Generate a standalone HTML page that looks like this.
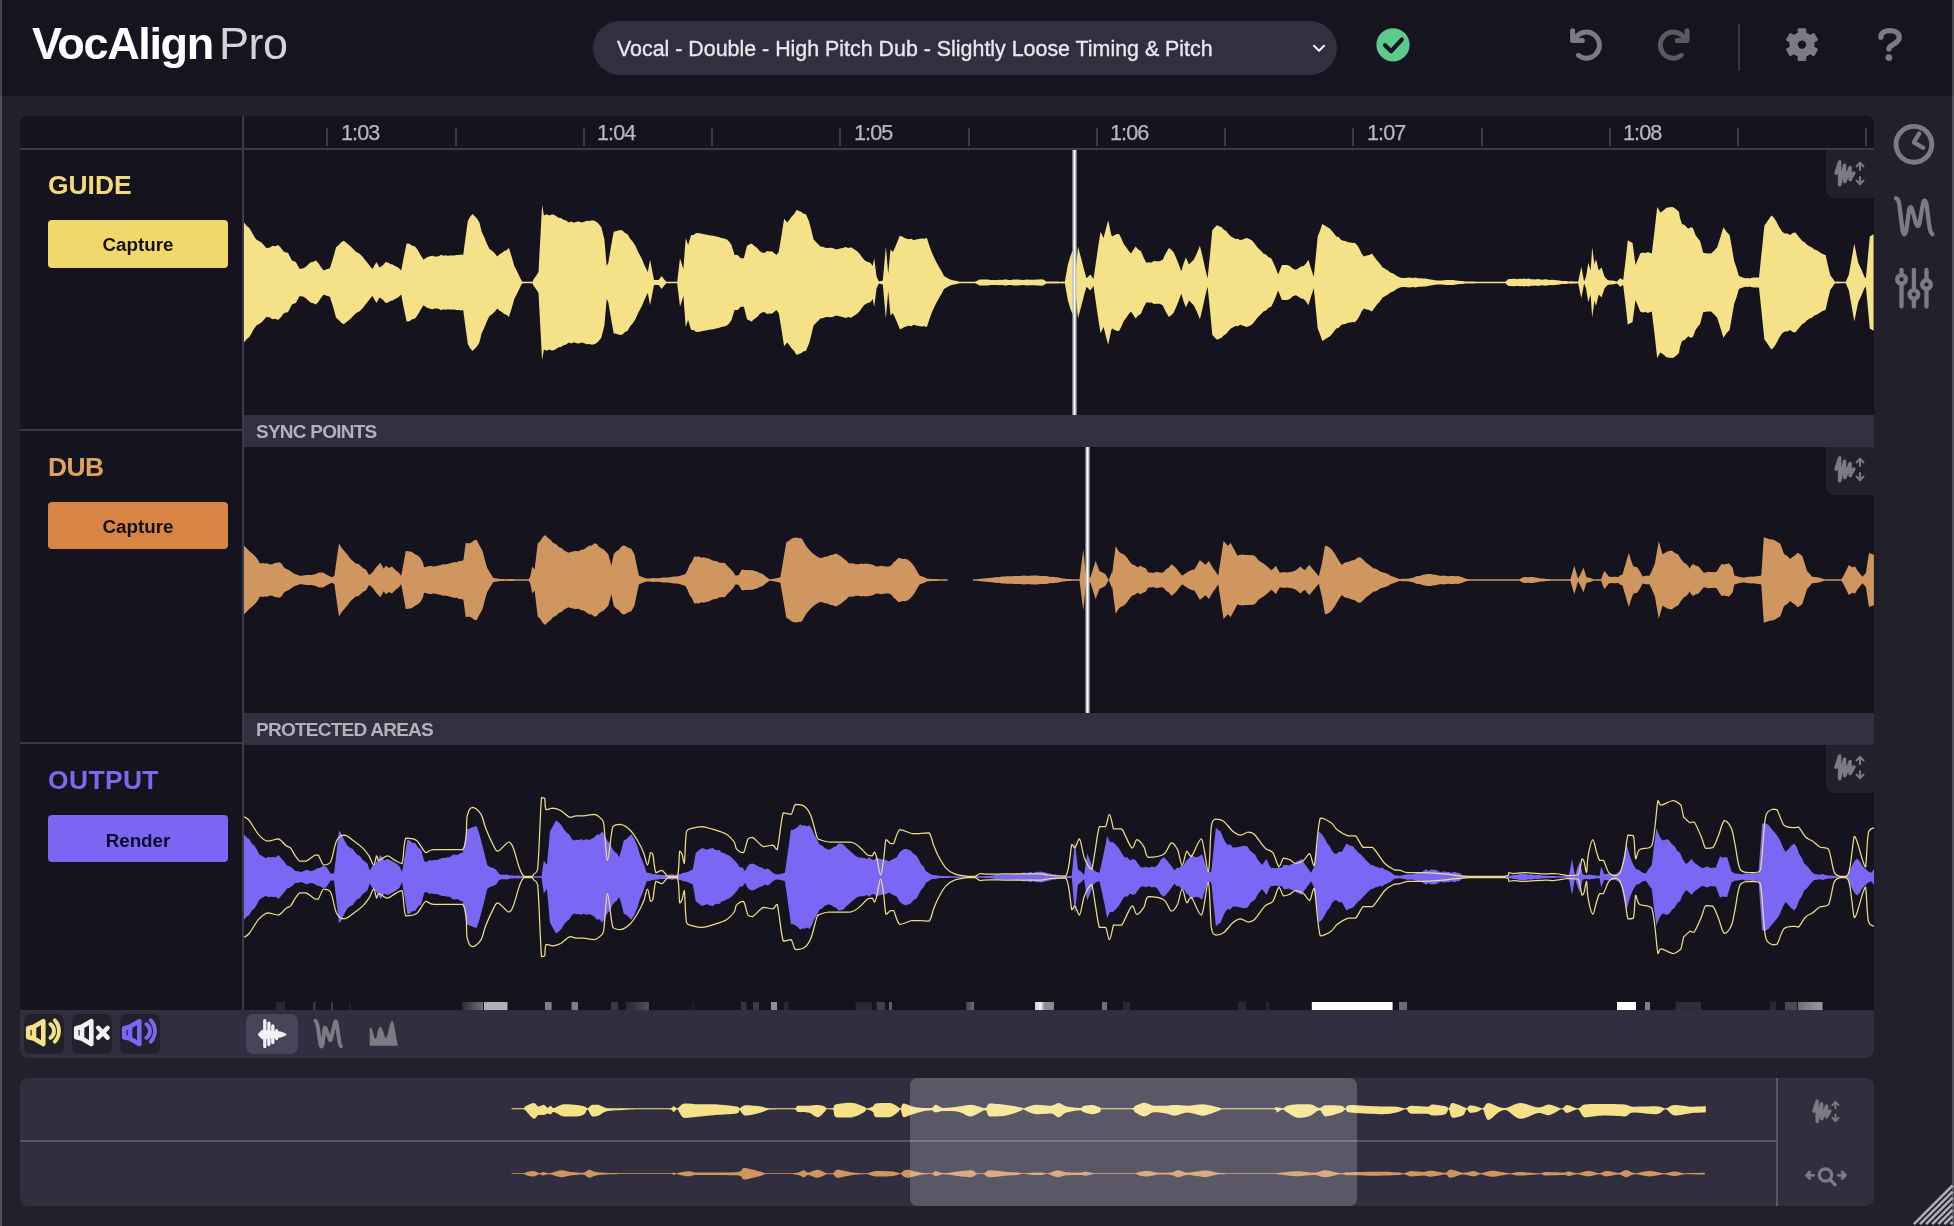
<!DOCTYPE html>
<html><head><meta charset="utf-8">
<style>
*{margin:0;padding:0;box-sizing:border-box}
html,body{width:1954px;height:1226px;overflow:hidden;background:#22212b;font-family:"Liberation Sans",sans-serif}
.abs{position:absolute}
#logo,#ddt,.lbl,.btn,.bar,.ruler{will-change:transform}
#hdr{left:0;top:0;width:1954px;height:96px;background:#16141e}
#lb{left:0;top:0;width:2px;height:1226px;background:linear-gradient(#48474d 0,#48474d 96px,#52515b 96px)}
#rb{left:1952px;top:0;width:2px;height:1226px;background:linear-gradient(#48474d 0,#48474d 96px,#52515b 96px)}
#logo{left:32px;top:18px;font-size:45px;color:#fff;font-weight:bold;white-space:nowrap;letter-spacing:-1.35px}
#logo span{font-weight:normal;color:#d4d4d8;margin-left:6px;letter-spacing:-0.4px}
#dd{left:593px;top:21px;width:744px;height:54px;border-radius:27px;background:#322f41}
#ddt{left:617px;top:37px;font-size:21.4px;color:#e8e8ec;white-space:nowrap;-webkit-text-stroke:0.35px #e8e8ec}
#panel{left:20px;top:116px;width:1854px;height:942px;border-radius:8px;background:#15131d;overflow:hidden}
.hl{background:#3a3849}
.lbl{font-weight:bold;font-size:26.4px}
.btn{width:180px;border-radius:4px;text-align:center;font-weight:bold;font-size:18.8px;color:#121019}
.bar{background:#322f41;color:#b3b1bb;font-weight:bold;font-size:19px;letter-spacing:-0.75px}
.ruler{color:#b8b7c0;font-size:21.6px;letter-spacing:-0.9px;-webkit-text-stroke:0.25px #b8b7c0}
.tick{width:2px;height:18px;background:#3d3b4c}
#tb{left:20px;top:1010px;width:1854px;height:48px;background:#312e40;border-radius:0 0 8px 8px}
.ib{width:40px;height:40px;border-radius:7px;background:#22212b}
#ov{left:20px;top:1078px;width:1854px;height:128px;border-radius:8px;background:#312e40;overflow:hidden}
</style></head><body>
<div id="hdr" class="abs"></div>
<div id="lb" class="abs"></div>
<div id="rb" class="abs"></div>
<div id="logo" class="abs">VocAlign<span>Pro</span></div>
<div id="dd" class="abs"></div>
<div id="ddt" class="abs">Vocal - Double - High Pitch Dub - Slightly Loose Timing &amp; Pitch</div>


<svg class="abs" style="left:0;top:0" width="1954" height="96" viewBox="0 0 1954 96">
<polyline points="1314,45.8 1319,50.8 1324,45.8" fill="none" stroke="#fff" stroke-width="2" stroke-linecap="round" stroke-linejoin="round"/>
<circle cx="1393" cy="44.8" r="16.6" fill="#5ec98c"/>
<polyline points="1385,45.2 1391.2,51.2 1401.8,39.6" fill="none" stroke="#15141e" stroke-width="4.2" stroke-linecap="round" stroke-linejoin="round"/>
<g fill="none" stroke="#7c7b84" stroke-width="5" stroke-linecap="round" stroke-linejoin="round">
<path d="M1575.1 38.7 A13 13 0 1 1 1578.4 55.4"/>
<polyline points="1572.6,30.8 1572.6,40.6 1582.4,40.6"/>
</g>
<g fill="none" stroke="#5a595f" stroke-width="5" stroke-linecap="round" stroke-linejoin="round">
<path d="M1684.6 38.7 A13 13 0 1 0 1681.3 55.4"/>
<polyline points="1687.1,30.8 1687.1,40.6 1677.3,40.6"/>
</g>
<rect x="1738" y="24" width="2" height="47" fill="#35334a"/>
<g fill="#7c7b84" transform="translate(1802 44.6)">
<circle r="12.6"/>
<rect x="-4.3" y="-16.4" width="8.6" height="8" rx="1.2"/>
<rect x="-4.3" y="-16.4" width="8.6" height="8" rx="1.2" transform="rotate(60)"/>
<rect x="-4.3" y="-16.4" width="8.6" height="8" rx="1.2" transform="rotate(120)"/>
<rect x="-4.3" y="-16.4" width="8.6" height="8" rx="1.2" transform="rotate(180)"/>
<rect x="-4.3" y="-16.4" width="8.6" height="8" rx="1.2" transform="rotate(240)"/>
<rect x="-4.3" y="-16.4" width="8.6" height="8" rx="1.2" transform="rotate(300)"/>
<circle r="4.2" fill="#16141e"/>
</g>
<path d="M1880.9 37.2 C1880.9 32.9 1885 30.6 1890 30.6 C1895.2 30.6 1899.3 33.3 1899.3 37.3 C1899.3 41.1 1896 42.9 1893 44.6 C1890.5 46 1888.9 47 1888.9 49.1" fill="none" stroke="#7c7b84" stroke-width="5.3" stroke-linecap="round" stroke-linejoin="round"/>
<circle cx="1888.9" cy="57.6" r="3.4" fill="#7c7b84"/>
</svg>

<div id="panel" class="abs"></div>
<!-- ruler line -->
<div class="abs hl" style="left:20px;top:148px;width:1854px;height:2px"></div>
<!-- vertical divider -->
<div class="abs hl" style="left:242px;top:116px;width:2px;height:894px"></div>
<!-- left col dividers -->
<div class="abs hl" style="left:20px;top:429px;width:222px;height:2px"></div>
<div class="abs hl" style="left:20px;top:742px;width:222px;height:2px"></div>

<div class="abs lbl" style="left:48px;top:170px;color:#f2da7a">GUIDE</div>
<div class="abs btn" style="left:48px;top:220px;height:48px;line-height:49px;background:#f2d76b">Capture</div>
<div class="abs lbl" style="left:48px;top:452px;color:#e0a35e;letter-spacing:-0.6px">DUB</div>
<div class="abs btn" style="left:48px;top:502px;height:47px;line-height:50px;background:#d88444">Capture</div>
<div class="abs lbl" style="left:48px;top:765px;color:#7b6af0;letter-spacing:0.4px">OUTPUT</div>
<div class="abs btn" style="left:48px;top:815px;height:47px;line-height:51px;background:#7a66f2;color:#0c0a2a">Render</div>

<div class="abs bar" style="left:244px;top:415px;width:1630px;height:32px;line-height:34px;padding-left:12px">SYNC POINTS</div>
<div class="abs bar" style="left:244px;top:713px;width:1630px;height:32px;line-height:34px;padding-left:12px">PROTECTED AREAS</div>

<svg class="abs" style="left:0;top:0" width="1954" height="1226" viewBox="0 0 1954 1226">
<defs><clipPath id="cg"><rect x="244" y="150" width="1630" height="265"/></clipPath><clipPath id="cd"><rect x="244" y="447" width="1630" height="266"/></clipPath><clipPath id="co"><rect x="244" y="745" width="1630" height="265"/></clipPath></defs>
<path clip-path="url(#cg)" fill="#f5e187" d="M244.0 222.5 L246.6 225.7 L249.3 228.0 L251.6 231.7 L253.9 235.9 L256.3 239.6 L259.0 240.9 L261.7 242.7 L264.0 245.2 L266.3 248.1 L269.4 247.7 L272.5 245.8 L275.3 246.3 L278.0 245.0 L280.7 247.5 L283.4 251.2 L285.7 252.4 L288.0 252.7 L291.9 260.5 L295.8 262.0 L299.7 269.0 L303.5 268.2 L305.9 266.8 L308.2 264.4 L310.8 262.2 L313.4 261.8 L315.9 260.5 L318.5 263.2 L321.1 267.3 L323.7 270.6 L326.8 269.2 L329.9 268.2 L333.0 258.4 L336.1 247.3 L338.7 244.9 L341.2 242.3 L343.8 240.8 L346.2 242.8 L348.5 244.4 L350.8 246.5 L353.1 248.9 L356.2 252.0 L359.3 253.5 L362.4 256.5 L365.5 260.5 L367.8 263.2 L370.2 266.5 L372.5 269.0 L376.4 262.0 L379.5 267.5 L382.6 265.6 L385.7 262.0 L388.0 262.4 L390.3 264.0 L392.6 264.6 L395.0 265.9 L398.1 267.6 L401.2 270.6 L403.9 256.6 L406.6 243.4 L409.4 243.7 L412.3 245.7 L415.1 246.5 L418.0 250.4 L420.8 255.4 L423.6 259.7 L426.5 257.6 L429.3 256.5 L432.2 255.8 L434.4 256.5 L436.6 256.4 L438.8 256.2 L441.0 254.8 L443.2 255.7 L445.4 255.3 L447.7 255.8 L449.9 255.4 L452.1 255.6 L454.3 255.6 L456.5 255.1 L458.7 255.0 L460.9 254.4 L463.2 255.1 L465.5 237.7 L467.8 221.0 L470.1 216.7 L472.5 214.0 L474.8 216.2 L477.1 218.8 L479.4 222.5 L481.7 231.8 L484.3 237.2 L486.9 243.8 L489.5 248.9 L492.1 250.8 L494.7 253.2 L497.2 256.6 L499.6 254.2 L501.9 253.1 L504.2 251.1 L506.5 250.3 L508.9 248.1 L511.6 256.4 L514.3 265.9 L516.9 271.0 L519.5 276.6 L522.0 281.4 L524.7 281.7 L527.3 281.7 L530.0 281.7 L532.9 281.4 L533.1 279.9 L537.0 274.4 L538.5 272.1 L542.1 204.7 L543.9 215.6 L546.5 214.3 L549.1 215.6 L551.7 214.5 L554.0 214.8 L556.3 216.3 L558.7 217.7 L561.0 217.9 L563.6 219.8 L566.2 220.5 L568.7 222.5 L571.3 221.6 L573.9 222.8 L576.5 221.8 L579.1 221.5 L581.7 222.6 L584.2 221.8 L586.8 220.8 L589.4 221.0 L592.0 220.2 L595.1 221.1 L598.2 223.3 L601.3 227.2 L604.4 239.6 L606.7 265.9 L608.3 262.8 L611.0 246.5 L613.7 231.8 L616.8 230.9 L619.9 230.0 L622.5 230.5 L625.0 233.1 L627.6 234.2 L630.2 238.8 L632.8 241.7 L635.4 245.8 L638.5 252.8 L641.6 258.2 L644.7 265.7 L647.8 272.1 L650.1 259.7 L654.0 279.9 L656.3 279.9 L658.6 279.9 L661.7 276.0 L664.0 279.2 L666.4 281.7 L669.1 281.7 L671.8 281.7 L674.5 281.7 L677.2 281.7 L680.0 258.2 L683.4 269.0 L685.7 238.0 L688.1 245.0 L691.2 234.9 L693.5 234.9 L695.8 233.3 L698.1 233.0 L700.5 233.4 L703.0 234.1 L705.6 234.5 L708.2 234.9 L710.8 235.4 L713.4 235.7 L716.0 236.5 L718.7 237.1 L721.4 237.9 L724.1 238.6 L726.8 239.6 L729.1 241.5 L731.5 245.0 L734.6 255.1 L737.7 255.1 L740.8 258.2 L743.9 258.2 L747.0 245.8 L749.3 244.6 L751.6 243.4 L754.3 245.9 L757.0 247.7 L759.7 250.9 L762.5 252.7 L764.8 252.7 L767.1 251.1 L769.4 251.5 L771.7 251.2 L774.1 253.0 L776.4 255.1 L778.7 252.0 L781.4 236.2 L784.1 218.7 L787.2 222.5 L789.6 219.6 L791.9 216.2 L794.2 214.1 L796.5 210.1 L798.9 210.9 L801.2 211.8 L803.5 213.8 L805.8 214.0 L808.9 221.0 L811.3 230.0 L813.6 239.6 L816.7 242.7 L819.8 245.8 L820.0 246.5 L822.6 246.7 L825.2 247.8 L827.7 248.1 L830.2 247.8 L832.7 247.9 L835.2 249.2 L837.7 249.3 L840.1 248.6 L842.9 247.9 L845.6 247.1 L848.3 248.1 L851.0 247.3 L854.1 249.3 L857.2 251.2 L859.8 254.1 L862.4 257.7 L864.9 260.5 L867.7 261.9 L870.4 262.8 L872.7 265.9 L874.2 258.2 L876.6 276.8 L878.9 281.4 L882.8 280.6 L885.9 246.5 L888.2 273.7 L890.5 249.6 L892.8 252.0 L895.2 246.9 L897.5 241.4 L899.8 235.7 L902.1 236.6 L904.5 238.1 L906.8 238.8 L909.1 239.2 L911.4 238.7 L913.8 240.2 L916.1 239.6 L918.8 239.1 L921.5 238.4 L924.2 238.8 L926.9 238.0 L929.3 245.5 L931.6 252.0 L935.5 260.5 L939.3 267.5 L941.6 271.2 L944.0 276.0 L946.6 277.6 L949.1 278.9 L951.7 279.9 L954.3 280.5 L956.9 281.0 L959.5 281.7 L961.7 281.7 L963.9 281.7 L966.1 281.7 L968.3 281.7 L970.5 281.7 L972.8 281.7 L975.0 281.7 L977.3 280.7 L979.6 279.4 L982.3 279.6 L985.0 279.5 L987.8 279.5 L990.5 279.9 L992.8 279.9 L995.0 280.0 L997.3 280.1 L999.6 279.8 L1001.9 280.0 L1004.2 279.6 L1006.5 279.6 L1008.8 280.0 L1011.1 279.9 L1013.4 279.5 L1015.7 279.6 L1018.0 279.5 L1020.2 279.8 L1022.5 279.9 L1024.8 279.8 L1027.1 279.5 L1029.4 279.8 L1031.7 279.7 L1034.0 279.7 L1036.3 279.6 L1038.6 279.6 L1040.9 279.3 L1043.2 279.6 L1046.3 281.4 L1048.6 281.5 L1050.9 281.6 L1053.2 281.4 L1055.5 281.5 L1057.9 281.5 L1060.2 281.7 L1062.5 281.6 L1064.8 281.7 L1067.9 264.4 L1070.3 256.6 L1072.6 250.4 L1075.7 270.6 L1078.0 246.5 L1081.9 261.3 L1084.2 270.3 L1086.5 278.3 L1090.4 274.4 L1093.5 279.1 L1097.4 252.0 L1100.5 231.8 L1103.6 238.0 L1105.9 228.7 L1108.2 220.2 L1111.3 234.9 L1112.3 236.5 L1114.6 234.9 L1117.0 233.9 L1119.3 234.2 L1121.6 238.9 L1123.9 244.2 L1126.3 247.3 L1128.6 250.8 L1130.9 253.5 L1133.2 250.3 L1135.6 246.5 L1138.3 249.4 L1141.0 251.2 L1143.7 257.8 L1146.4 262.8 L1148.9 262.3 L1151.5 262.4 L1154.0 261.1 L1156.5 261.3 L1159.6 261.3 L1162.7 259.7 L1165.8 253.2 L1168.9 248.1 L1171.2 249.7 L1173.5 252.0 L1176.1 257.7 L1178.7 264.2 L1181.3 271.3 L1183.6 263.6 L1185.9 257.4 L1189.0 264.4 L1191.4 261.9 L1193.7 259.7 L1196.8 253.6 L1199.9 245.8 L1202.5 256.2 L1205.0 268.1 L1207.6 278.3 L1210.0 254.7 L1212.3 230.3 L1214.6 227.5 L1216.9 225.3 L1219.3 226.2 L1221.6 227.2 L1223.9 229.7 L1226.2 231.0 L1228.5 233.9 L1230.9 236.5 L1233.2 237.7 L1235.5 238.9 L1237.8 238.7 L1240.2 240.3 L1243.3 239.2 L1246.4 238.0 L1249.5 239.1 L1252.6 241.1 L1255.3 244.5 L1258.0 247.9 L1260.7 250.4 L1263.4 253.5 L1266.0 254.5 L1268.6 257.2 L1271.2 258.2 L1273.5 263.1 L1275.8 268.3 L1278.1 274.4 L1282.0 265.1 L1284.6 264.9 L1287.2 265.1 L1289.8 265.9 L1292.9 268.7 L1296.0 269.8 L1298.5 268.3 L1301.1 266.6 L1303.7 265.9 L1306.0 263.6 L1308.4 259.7 L1311.1 268.7 L1313.8 276.8 L1317.7 236.5 L1320.0 230.7 L1322.3 224.1 L1324.9 225.6 L1327.5 227.3 L1330.1 228.7 L1333.2 232.6 L1336.3 236.5 L1338.6 237.1 L1340.9 239.7 L1343.2 240.8 L1345.5 241.1 L1347.9 242.2 L1350.2 242.6 L1352.5 243.1 L1354.8 242.7 L1357.2 245.3 L1359.5 249.0 L1361.8 253.9 L1364.1 256.6 L1366.7 255.6 L1369.3 254.9 L1371.9 253.5 L1374.6 257.3 L1377.3 260.8 L1380.0 263.7 L1382.7 267.5 L1385.5 268.9 L1388.2 270.8 L1390.9 272.7 L1393.6 273.7 L1396.8 275.9 L1400.0 277.5 L1402.2 278.1 L1404.4 277.9 L1406.6 277.7 L1408.9 277.5 L1411.1 277.8 L1413.3 278.1 L1415.5 277.5 L1418.0 278.2 L1420.5 278.3 L1422.9 278.4 L1425.4 278.5 L1427.9 279.1 L1430.2 279.6 L1432.5 279.7 L1434.9 280.2 L1437.2 280.6 L1439.5 280.5 L1441.8 280.4 L1444.2 280.3 L1446.5 280.0 L1448.8 280.0 L1451.1 279.9 L1453.5 280.0 L1455.8 280.4 L1458.1 280.7 L1460.4 280.9 L1462.8 281.1 L1465.1 281.4 L1467.4 281.6 L1469.7 281.6 L1472.1 281.6 L1474.4 281.6 L1476.7 281.7 L1479.0 281.7 L1481.4 281.7 L1483.7 281.7 L1486.0 281.7 L1488.3 281.7 L1490.7 281.7 L1493.0 281.7 L1495.5 281.7 L1497.9 281.7 L1500.4 281.7 L1502.9 281.7 L1505.4 281.7 L1508.5 279.1 L1510.7 278.9 L1512.9 278.8 L1515.1 278.8 L1517.3 279.2 L1519.5 278.7 L1521.8 279.1 L1524.0 278.6 L1526.3 279.0 L1528.6 278.6 L1530.9 279.3 L1533.3 279.3 L1535.6 279.4 L1537.9 278.9 L1540.2 279.5 L1542.6 279.7 L1544.9 279.2 L1547.2 279.6 L1549.7 280.0 L1552.1 279.8 L1554.5 280.1 L1557.0 280.3 L1559.4 280.5 L1561.8 280.9 L1564.3 281.1 L1566.6 281.1 L1568.9 281.4 L1571.2 281.3 L1573.6 281.5 L1575.9 281.6 L1578.2 281.7 L1581.3 266.7 L1584.1 281.4 L1586.0 276.8 L1588.3 262.8 L1590.6 270.6 L1592.2 247.3 L1594.5 264.4 L1596.0 258.9 L1598.7 270.6 L1601.5 267.5 L1604.6 276.8 L1607.7 279.9 L1610.0 280.5 L1612.3 280.5 L1614.6 280.9 L1617.0 281.4 L1620.1 278.3 L1623.2 279.9 L1625.5 260.9 L1627.8 240.3 L1630.1 241.8 L1632.5 242.7 L1635.5 265.1 L1637.9 259.2 L1640.2 253.5 L1642.8 252.4 L1645.4 253.0 L1647.9 252.0 L1651.8 253.5 L1654.5 230.9 L1657.2 207.0 L1660.3 212.5 L1663.4 210.6 L1666.5 207.8 L1669.6 207.2 L1672.7 207.0 L1675.8 208.9 L1678.9 211.7 L1680.0 217.9 L1682.0 224.1 L1684.6 224.9 L1688.2 228.7 L1690.8 227.2 L1692.9 228.0 L1695.5 234.9 L1697.8 238.2 L1700.1 241.1 L1703.2 252.8 L1705.8 253.3 L1708.4 253.5 L1711.0 253.5 L1714.1 250.7 L1717.2 247.3 L1720.3 237.4 L1723.4 227.2 L1726.5 231.8 L1729.6 234.9 L1731.9 248.1 L1734.2 261.3 L1736.5 267.8 L1738.9 276.0 L1742.0 277.3 L1745.1 278.3 L1747.4 277.9 L1749.7 278.4 L1752.0 277.7 L1754.4 277.5 L1756.7 277.5 L1759.0 277.5 L1761.7 251.6 L1764.4 225.6 L1766.8 222.3 L1769.1 218.7 L1771.4 215.6 L1773.7 217.6 L1776.0 221.0 L1779.1 227.1 L1782.2 231.8 L1784.8 233.6 L1787.4 233.5 L1790.0 234.9 L1792.7 233.0 L1795.4 232.6 L1797.7 235.4 L1800.1 238.4 L1802.4 241.1 L1804.7 242.3 L1807.0 244.8 L1809.4 246.2 L1811.7 247.3 L1814.3 249.4 L1816.8 250.3 L1819.4 252.0 L1822.5 253.9 L1825.6 255.1 L1827.9 265.6 L1830.3 275.2 L1832.6 278.3 L1834.9 281.7 L1837.6 281.6 L1840.3 281.7 L1843.1 281.7 L1845.8 281.7 L1848.9 274.4 L1851.6 259.1 L1854.3 243.5 L1858.2 262.8 L1861.3 269.2 L1864.4 276.8 L1865.9 278.3 L1869.8 236.5 L1873.6 234.2 L1873.6 330.8 L1869.8 328.5 L1865.9 286.7 L1864.4 288.2 L1861.3 295.8 L1858.2 302.2 L1854.3 321.5 L1851.6 305.9 L1848.9 290.6 L1845.8 283.3 L1843.1 283.3 L1840.3 283.3 L1837.6 283.4 L1834.9 283.3 L1832.6 286.7 L1830.3 289.8 L1827.9 299.4 L1825.6 309.9 L1822.5 311.1 L1819.4 313.0 L1816.8 314.7 L1814.3 315.6 L1811.7 317.7 L1809.4 318.8 L1807.0 320.2 L1804.7 322.7 L1802.4 323.9 L1800.1 326.6 L1797.7 329.6 L1795.4 332.4 L1792.7 332.0 L1790.0 330.1 L1787.4 331.5 L1784.8 331.4 L1782.2 333.2 L1779.1 337.9 L1776.0 344.0 L1773.7 347.4 L1771.4 349.4 L1769.1 346.3 L1766.8 342.7 L1764.4 339.4 L1761.7 313.4 L1759.0 287.5 L1756.7 287.5 L1754.4 287.5 L1752.0 287.3 L1749.7 286.6 L1747.4 287.1 L1745.1 286.7 L1742.0 287.7 L1738.9 289.0 L1736.5 297.2 L1734.2 303.7 L1731.9 316.9 L1729.6 330.1 L1726.5 333.2 L1723.4 337.8 L1720.3 327.6 L1717.2 317.7 L1714.1 314.3 L1711.0 311.5 L1708.4 311.5 L1705.8 311.7 L1703.2 312.2 L1700.1 323.9 L1697.8 326.8 L1695.5 330.1 L1692.9 337.0 L1690.8 337.8 L1688.2 336.3 L1684.6 340.1 L1682.0 340.9 L1680.0 347.1 L1678.9 353.3 L1675.8 356.1 L1672.7 358.0 L1669.6 357.8 L1666.5 357.2 L1663.4 354.4 L1660.3 352.5 L1657.2 358.0 L1654.5 334.1 L1651.8 311.5 L1647.9 313.0 L1645.4 312.0 L1642.8 312.6 L1640.2 311.5 L1637.9 305.8 L1635.5 299.9 L1632.5 322.3 L1630.1 323.2 L1627.8 324.7 L1625.5 304.1 L1623.2 285.1 L1620.1 286.7 L1617.0 283.6 L1614.6 284.1 L1612.3 284.5 L1610.0 284.5 L1607.7 285.1 L1604.6 288.2 L1601.5 297.5 L1598.7 294.4 L1596.0 306.1 L1594.5 300.6 L1592.2 317.7 L1590.6 294.4 L1588.3 302.2 L1586.0 288.2 L1584.1 283.6 L1581.3 298.3 L1578.2 283.3 L1575.9 283.4 L1573.6 283.5 L1571.2 283.7 L1568.9 283.6 L1566.6 283.9 L1564.3 283.9 L1561.8 284.1 L1559.4 284.5 L1557.0 284.7 L1554.5 284.9 L1552.1 285.2 L1549.7 285.0 L1547.2 285.4 L1544.9 285.8 L1542.6 285.3 L1540.2 285.5 L1537.9 286.1 L1535.6 285.6 L1533.3 285.7 L1530.9 285.7 L1528.6 286.4 L1526.3 286.0 L1524.0 286.4 L1521.8 285.9 L1519.5 286.3 L1517.3 285.8 L1515.1 286.2 L1512.9 286.2 L1510.7 286.1 L1508.5 285.9 L1505.4 283.3 L1502.9 283.3 L1500.4 283.3 L1497.9 283.3 L1495.5 283.3 L1493.0 283.3 L1490.7 283.3 L1488.3 283.3 L1486.0 283.3 L1483.7 283.3 L1481.4 283.3 L1479.0 283.3 L1476.7 283.3 L1474.4 283.4 L1472.1 283.4 L1469.7 283.4 L1467.4 283.4 L1465.1 283.6 L1462.8 283.9 L1460.4 284.1 L1458.1 284.3 L1455.8 284.6 L1453.5 285.0 L1451.1 285.1 L1448.8 285.0 L1446.5 285.0 L1444.2 284.7 L1441.8 284.6 L1439.5 284.5 L1437.2 284.4 L1434.9 284.8 L1432.5 285.3 L1430.2 285.4 L1427.9 285.9 L1425.4 286.5 L1422.9 286.6 L1420.5 286.7 L1418.0 286.8 L1415.5 287.5 L1413.3 286.9 L1411.1 287.2 L1408.9 287.5 L1406.6 287.3 L1404.4 287.1 L1402.2 286.9 L1400.0 287.5 L1396.8 289.1 L1393.6 291.3 L1390.9 292.3 L1388.2 294.2 L1385.5 296.1 L1382.7 297.5 L1380.0 301.3 L1377.3 304.2 L1374.6 307.7 L1371.9 311.5 L1369.3 310.1 L1366.7 309.4 L1364.1 308.4 L1361.8 311.1 L1359.5 316.0 L1357.2 319.7 L1354.8 322.3 L1352.5 321.9 L1350.2 322.4 L1347.9 322.8 L1345.5 323.9 L1343.2 324.2 L1340.9 325.3 L1338.6 327.9 L1336.3 328.5 L1333.2 332.4 L1330.1 336.3 L1327.5 337.7 L1324.9 339.4 L1322.3 340.9 L1320.0 334.3 L1317.7 328.5 L1313.8 288.2 L1311.1 296.3 L1308.4 305.3 L1306.0 301.4 L1303.7 299.1 L1301.1 298.4 L1298.5 296.7 L1296.0 295.2 L1292.9 296.3 L1289.8 299.1 L1287.2 299.9 L1284.6 300.1 L1282.0 299.9 L1278.1 290.6 L1275.8 296.7 L1273.5 301.9 L1271.2 306.8 L1268.6 307.8 L1266.0 310.5 L1263.4 311.5 L1260.7 314.6 L1258.0 317.1 L1255.3 320.5 L1252.6 323.9 L1249.5 325.9 L1246.4 327.0 L1243.3 325.8 L1240.2 324.7 L1237.8 326.3 L1235.5 326.1 L1233.2 327.3 L1230.9 328.5 L1228.5 331.1 L1226.2 334.0 L1223.9 335.3 L1221.6 337.8 L1219.3 338.8 L1216.9 339.7 L1214.6 337.5 L1212.3 334.7 L1210.0 310.3 L1207.6 286.7 L1205.0 296.9 L1202.5 308.8 L1199.9 319.2 L1196.8 311.4 L1193.7 305.3 L1191.4 303.1 L1189.0 300.6 L1185.9 307.6 L1183.6 301.4 L1181.3 293.7 L1178.7 300.8 L1176.1 307.3 L1173.5 313.0 L1171.2 315.3 L1168.9 316.9 L1165.8 311.8 L1162.7 305.3 L1159.6 303.7 L1156.5 303.7 L1154.0 303.9 L1151.5 302.6 L1148.9 302.7 L1146.4 302.2 L1143.7 307.2 L1141.0 313.8 L1138.3 315.6 L1135.6 318.5 L1133.2 314.7 L1130.9 311.5 L1128.6 314.2 L1126.3 317.7 L1123.9 320.8 L1121.6 326.1 L1119.3 330.8 L1117.0 331.1 L1114.6 330.1 L1112.3 328.5 L1111.3 330.1 L1108.2 344.8 L1105.9 336.3 L1103.6 327.0 L1100.5 333.2 L1097.4 313.0 L1093.5 285.9 L1090.4 290.6 L1086.5 286.7 L1084.2 294.7 L1081.9 303.7 L1078.0 318.5 L1075.7 294.4 L1072.6 314.6 L1070.3 308.4 L1067.9 300.6 L1064.8 283.3 L1062.5 283.4 L1060.2 283.3 L1057.9 283.5 L1055.5 283.5 L1053.2 283.6 L1050.9 283.4 L1048.6 283.5 L1046.3 283.6 L1043.2 285.4 L1040.9 285.7 L1038.6 285.4 L1036.3 285.4 L1034.0 285.3 L1031.7 285.3 L1029.4 285.2 L1027.1 285.5 L1024.8 285.2 L1022.5 285.1 L1020.2 285.2 L1018.0 285.5 L1015.7 285.4 L1013.4 285.5 L1011.1 285.1 L1008.8 285.0 L1006.5 285.4 L1004.2 285.4 L1001.9 285.0 L999.6 285.2 L997.3 284.9 L995.0 285.0 L992.8 285.1 L990.5 285.1 L987.8 285.5 L985.0 285.5 L982.3 285.4 L979.6 285.6 L977.3 284.3 L975.0 283.3 L972.8 283.3 L970.5 283.3 L968.3 283.3 L966.1 283.3 L963.9 283.3 L961.7 283.3 L959.5 283.3 L956.9 284.0 L954.3 284.5 L951.7 285.1 L949.1 286.1 L946.6 287.4 L944.0 289.0 L941.6 293.8 L939.3 297.5 L935.5 304.5 L931.6 313.0 L929.3 319.5 L926.9 327.0 L924.2 326.2 L921.5 326.6 L918.8 325.9 L916.1 325.4 L913.8 324.8 L911.4 326.3 L909.1 325.8 L906.8 326.2 L904.5 326.9 L902.1 328.4 L899.8 329.3 L897.5 323.6 L895.2 318.1 L892.8 313.0 L890.5 315.4 L888.2 291.3 L885.9 318.5 L882.8 284.4 L878.9 283.6 L876.6 288.2 L874.2 306.8 L872.7 299.1 L870.4 302.2 L867.7 303.1 L864.9 304.5 L862.4 307.3 L859.8 310.9 L857.2 313.8 L854.1 315.7 L851.0 317.7 L848.3 316.9 L845.6 317.9 L842.9 317.1 L840.1 316.4 L837.7 315.7 L835.2 315.8 L832.7 317.1 L830.2 317.2 L827.7 316.9 L825.2 317.2 L822.6 318.3 L820.0 318.5 L819.8 319.2 L816.7 322.3 L813.6 325.4 L811.3 335.0 L808.9 344.0 L805.8 351.0 L803.5 351.2 L801.2 353.2 L798.9 354.1 L796.5 354.9 L794.2 350.9 L791.9 348.8 L789.6 345.4 L787.2 342.5 L784.1 346.3 L781.4 328.8 L778.7 313.0 L776.4 309.9 L774.1 312.0 L771.7 313.8 L769.4 313.5 L767.1 313.9 L764.8 312.3 L762.5 312.3 L759.7 314.1 L757.0 317.3 L754.3 319.1 L751.6 321.6 L749.3 320.4 L747.0 319.2 L743.9 306.8 L740.8 306.8 L737.7 309.9 L734.6 309.9 L731.5 320.0 L729.1 323.5 L726.8 325.4 L724.1 326.4 L721.4 327.1 L718.7 327.9 L716.0 328.5 L713.4 329.3 L710.8 329.6 L708.2 330.1 L705.6 330.5 L703.0 330.9 L700.5 331.6 L698.1 332.0 L695.8 331.7 L693.5 330.1 L691.2 330.1 L688.1 320.0 L685.7 327.0 L683.4 296.0 L680.0 306.8 L677.2 283.3 L674.5 283.3 L671.8 283.3 L669.1 283.3 L666.4 283.3 L664.0 285.8 L661.7 289.0 L658.6 285.1 L656.3 285.1 L654.0 285.1 L650.1 305.3 L647.8 292.9 L644.7 299.3 L641.6 306.8 L638.5 312.2 L635.4 319.2 L632.8 323.3 L630.2 326.2 L627.6 330.8 L625.0 331.9 L622.5 334.5 L619.9 335.0 L616.8 334.1 L613.7 333.2 L611.0 318.5 L608.3 302.2 L606.7 299.1 L604.4 325.4 L601.3 337.8 L598.2 341.7 L595.1 343.9 L592.0 344.8 L589.4 344.0 L586.8 344.2 L584.2 343.2 L581.7 342.4 L579.1 343.5 L576.5 343.2 L573.9 342.2 L571.3 343.4 L568.7 342.5 L566.2 344.5 L563.6 345.2 L561.0 347.1 L558.7 347.3 L556.3 348.7 L554.0 350.2 L551.7 350.5 L549.1 349.4 L546.5 350.7 L543.9 349.4 L542.1 360.3 L538.5 292.9 L537.0 290.6 L533.1 285.1 L532.9 283.6 L530.0 283.3 L527.3 283.3 L524.7 283.3 L522.0 283.6 L519.5 288.4 L516.9 294.0 L514.3 299.1 L511.6 308.6 L508.9 316.9 L506.5 314.7 L504.2 313.9 L501.9 311.9 L499.6 310.8 L497.2 308.4 L494.7 311.8 L492.1 314.2 L489.5 316.1 L486.9 321.2 L484.3 327.8 L481.7 333.2 L479.4 342.5 L477.1 346.2 L474.8 348.8 L472.5 351.0 L470.1 348.3 L467.8 344.0 L465.5 327.3 L463.2 309.9 L460.9 310.6 L458.7 310.0 L456.5 309.9 L454.3 309.4 L452.1 309.4 L449.9 309.6 L447.7 309.2 L445.4 309.7 L443.2 309.3 L441.0 310.2 L438.8 308.8 L436.6 308.6 L434.4 308.5 L432.2 309.2 L429.3 308.5 L426.5 307.4 L423.6 305.3 L420.8 309.6 L418.0 314.6 L415.1 318.5 L412.3 319.3 L409.4 321.3 L406.6 321.6 L403.9 308.4 L401.2 294.4 L398.1 297.4 L395.0 299.1 L392.6 300.4 L390.3 301.0 L388.0 302.6 L385.7 303.0 L382.6 299.4 L379.5 297.5 L376.4 303.0 L372.5 296.0 L370.2 298.5 L367.8 301.8 L365.5 304.5 L362.4 308.5 L359.3 311.5 L356.2 313.0 L353.1 316.1 L350.8 318.5 L348.5 320.6 L346.2 322.2 L343.8 324.2 L341.2 322.7 L338.7 320.1 L336.1 317.7 L333.0 306.6 L329.9 296.8 L326.8 295.8 L323.7 294.4 L321.1 297.7 L318.5 301.8 L315.9 304.5 L313.4 303.2 L310.8 302.8 L308.2 300.6 L305.9 298.2 L303.5 296.8 L299.7 296.0 L295.8 303.0 L291.9 304.5 L288.0 312.3 L285.7 312.6 L283.4 313.8 L280.7 317.5 L278.0 320.0 L275.3 318.7 L272.5 319.2 L269.4 317.3 L266.3 316.9 L264.0 319.8 L261.7 322.3 L259.0 324.1 L256.3 325.4 L253.9 329.1 L251.6 333.3 L249.3 337.0 L246.6 339.3 L244.0 342.5Z"/>
<path clip-path="url(#cd)" fill="#d09660" d="M244.0 545.8 L246.6 548.3 L249.2 551.1 L252.3 553.4 L255.4 556.5 L257.7 559.5 L260.0 563.4 L262.3 562.9 L264.6 563.4 L266.9 563.3 L269.2 564.2 L271.7 564.4 L274.3 563.2 L276.8 562.7 L279.2 562.3 L281.5 563.4 L284.5 568.0 L287.1 569.3 L289.6 570.5 L292.2 572.6 L294.8 574.1 L297.3 574.7 L299.9 575.7 L302.2 575.7 L304.5 575.3 L306.8 575.1 L309.1 574.9 L311.4 575.1 L313.7 574.5 L316.0 574.1 L318.3 572.8 L320.6 572.6 L322.9 572.6 L326.0 574.2 L329.1 576.0 L332.1 577.2 L334.4 575.7 L336.7 559.1 L339.0 543.5 L341.7 547.9 L344.4 551.1 L347.5 554.8 L350.5 558.8 L353.2 561.3 L355.9 563.4 L358.6 564.0 L361.3 566.5 L363.6 568.5 L365.9 569.6 L369.0 574.9 L371.3 573.4 L373.6 571.1 L375.9 567.5 L378.2 564.9 L380.5 562.7 L383.6 568.8 L385.9 565.7 L388.9 568.0 L392.0 566.5 L394.3 569.1 L396.6 571.1 L398.9 572.8 L401.2 575.7 L403.5 563.4 L405.8 551.1 L408.9 551.2 L412.0 551.9 L415.0 554.3 L418.1 555.7 L420.4 558.1 L422.7 561.9 L424.2 567.3 L426.5 566.8 L428.9 566.1 L431.2 566.1 L433.5 566.5 L435.8 566.2 L438.1 565.6 L440.4 565.3 L442.7 564.2 L445.0 564.4 L447.3 564.1 L449.6 563.4 L451.9 562.7 L454.2 562.0 L456.5 562.5 L458.8 561.0 L461.1 561.1 L463.4 560.3 L465.7 542.7 L468.8 543.5 L471.3 542.5 L473.9 540.4 L476.5 539.6 L479.5 545.4 L482.6 551.1 L484.9 559.9 L487.2 568.0 L490.3 573.0 L493.3 578.0 L495.9 578.3 L498.5 578.8 L501.0 579.1 L503.3 579.0 L505.6 579.2 L507.9 579.0 L510.2 579.1 L512.5 579.1 L514.8 579.2 L517.1 579.2 L519.4 579.2 L521.7 579.2 L524.0 579.2 L526.4 579.2 L528.7 579.2 L530.0 577.2 L532.3 566.5 L534.6 569.6 L537.7 543.5 L540.2 541.2 L542.8 537.1 L545.4 535.0 L547.9 538.1 L550.5 539.7 L553.0 542.7 L556.1 544.3 L559.2 547.3 L561.5 547.9 L563.8 550.2 L566.1 551.6 L568.4 552.7 L570.9 552.1 L573.5 551.2 L576.1 551.1 L578.6 551.2 L581.2 549.7 L583.7 549.6 L586.4 547.5 L589.1 545.8 L591.8 545.5 L594.5 543.2 L596.8 544.0 L599.1 547.0 L601.4 548.2 L603.7 549.6 L606.0 551.7 L608.3 554.2 L611.4 565.7 L613.7 554.2 L616.2 551.3 L618.7 550.0 L621.2 546.8 L623.7 545.3 L626.2 546.4 L628.8 548.0 L631.3 548.8 L634.4 554.2 L636.7 565.2 L639.0 575.7 L641.6 576.8 L644.1 577.8 L646.7 578.5 L649.0 578.5 L651.3 578.2 L653.6 578.1 L655.9 578.3 L658.2 578.3 L660.5 578.0 L662.9 577.6 L665.3 577.5 L667.7 577.4 L670.2 577.3 L672.6 576.8 L675.0 576.5 L677.4 576.5 L680.0 575.7 L682.5 575.0 L685.1 574.2 L687.4 570.5 L689.7 564.7 L692.0 561.7 L694.3 556.5 L696.6 556.7 L698.9 556.4 L701.2 557.7 L703.5 557.3 L706.2 557.9 L708.9 558.5 L711.6 559.9 L714.2 561.1 L716.9 561.2 L719.6 562.7 L722.3 562.7 L725.0 563.1 L727.3 566.1 L729.6 568.0 L732.7 571.3 L735.7 575.7 L738.8 574.9 L741.9 569.6 L744.4 570.1 L747.0 570.1 L749.6 570.3 L752.0 570.1 L754.5 571.0 L756.9 571.4 L759.4 572.9 L761.8 573.4 L764.4 575.5 L767.0 577.4 L769.5 579.2 L772.2 579.0 L774.9 578.5 L777.6 577.9 L780.3 577.2 L783.3 560.1 L786.4 541.9 L788.7 541.0 L791.0 539.0 L793.3 538.0 L795.6 537.6 L798.7 537.9 L801.8 538.5 L804.1 542.5 L806.4 546.5 L808.9 549.3 L811.5 552.3 L814.0 554.2 L817.0 556.5 L820.0 558.0 L821.7 558.0 L824.7 556.8 L827.7 556.5 L830.2 554.9 L832.8 554.7 L835.4 553.4 L837.9 554.5 L840.5 556.1 L843.0 558.0 L846.1 560.4 L849.2 563.4 L851.5 563.3 L853.8 563.4 L856.1 564.2 L858.4 564.2 L860.9 563.6 L863.5 564.0 L866.1 563.4 L868.5 564.1 L871.0 564.2 L873.4 565.0 L875.9 566.2 L878.3 566.5 L881.0 565.8 L883.7 566.2 L886.4 566.4 L889.1 566.5 L891.4 565.2 L893.7 562.2 L896.0 560.6 L898.3 558.0 L900.6 558.2 L902.9 558.9 L905.2 558.7 L907.5 559.6 L909.8 561.3 L912.1 563.4 L914.7 567.0 L917.2 571.8 L919.8 575.7 L922.4 576.6 L924.9 577.6 L927.5 578.8 L929.7 578.8 L931.9 579.0 L934.1 579.0 L936.3 579.0 L938.6 579.2 L940.8 579.2 L943.0 579.2 L945.2 579.2 L947.4 579.2 L947.7 580.0 L972.5 580.0 L973.5 579.2 L976.1 579.2 L978.7 579.1 L981.2 578.7 L983.8 578.4 L986.3 578.3 L988.9 578.0 L991.5 577.7 L994.0 577.4 L996.6 577.1 L999.1 577.2 L1001.7 576.5 L1004.2 576.5 L1006.8 576.3 L1009.4 576.2 L1011.9 576.3 L1014.5 576.1 L1017.0 575.9 L1019.6 576.0 L1022.1 575.8 L1024.5 575.6 L1027.0 576.1 L1029.4 575.8 L1031.9 575.4 L1034.6 575.6 L1037.3 575.6 L1039.9 576.1 L1042.6 576.0 L1045.2 576.1 L1047.7 576.3 L1050.3 576.9 L1052.9 576.8 L1055.4 577.2 L1058.0 577.2 L1060.5 577.9 L1063.1 578.4 L1065.7 578.8 L1068.0 578.9 L1070.3 579.1 L1072.6 579.2 L1074.9 579.2 L1077.2 579.2 L1079.5 579.2 L1083.3 549.6 L1085.6 572.6 L1087.9 575.4 L1090.2 578.0 L1092.9 569.4 L1095.6 561.1 L1099.4 571.1 L1102.5 572.5 L1105.6 574.2 L1108.7 580.0 L1111.7 572.6 L1112.3 572.6 L1115.6 546.5 L1115.8 546.5 L1119.2 551.9 L1121.5 553.5 L1123.8 554.2 L1126.9 557.4 L1130.0 561.9 L1132.5 564.5 L1135.1 565.6 L1137.6 567.3 L1140.7 565.7 L1143.0 567.2 L1145.3 568.0 L1148.4 572.6 L1150.9 572.6 L1153.5 573.0 L1156.1 571.7 L1158.6 572.3 L1161.2 572.7 L1163.7 571.9 L1166.3 569.1 L1168.9 567.4 L1171.4 564.2 L1173.7 566.0 L1176.0 568.0 L1179.1 572.1 L1182.2 575.7 L1184.5 574.1 L1186.8 572.6 L1189.3 570.9 L1191.9 570.1 L1194.4 569.6 L1197.1 565.1 L1199.8 560.3 L1202.5 562.1 L1205.2 565.0 L1209.0 561.1 L1212.9 568.0 L1215.6 571.6 L1218.2 575.7 L1220.9 558.4 L1223.6 540.7 L1225.9 543.8 L1228.2 545.8 L1230.5 542.7 L1232.8 546.9 L1235.1 551.3 L1237.4 555.7 L1240.1 554.8 L1242.8 554.6 L1245.5 555.0 L1248.2 555.0 L1250.5 555.2 L1252.8 555.0 L1255.5 556.5 L1258.2 560.0 L1260.9 561.9 L1263.5 563.4 L1266.1 565.6 L1268.7 567.8 L1271.2 570.3 L1273.5 568.6 L1275.8 565.7 L1279.7 572.6 L1282.0 572.4 L1284.3 572.1 L1286.6 572.6 L1289.1 572.3 L1291.7 571.7 L1294.2 571.1 L1297.3 569.2 L1300.4 566.5 L1302.7 568.7 L1305.0 570.3 L1307.3 566.9 L1309.6 565.0 L1312.7 569.0 L1315.7 572.6 L1318.8 576.5 L1321.9 563.4 L1325.0 545.8 L1328.0 546.6 L1331.1 548.8 L1333.8 552.2 L1336.5 556.7 L1339.2 561.3 L1341.8 565.0 L1344.9 562.6 L1348.0 561.9 L1350.4 561.0 L1352.9 560.2 L1355.4 559.4 L1357.8 557.4 L1360.3 557.3 L1363.0 559.6 L1365.6 562.2 L1368.3 564.2 L1371.0 566.5 L1373.5 568.3 L1375.9 568.8 L1378.4 570.3 L1380.8 571.7 L1383.3 572.6 L1385.9 573.3 L1388.4 574.3 L1391.0 576.1 L1393.5 576.7 L1396.1 577.8 L1398.7 578.8 L1400.0 579.1 L1402.3 578.8 L1404.6 578.7 L1406.9 578.7 L1409.2 578.5 L1411.5 578.0 L1413.8 577.4 L1416.1 576.3 L1418.4 576.0 L1420.7 575.7 L1423.0 574.8 L1425.3 574.4 L1427.6 573.9 L1430.3 574.1 L1433.0 574.5 L1435.7 574.8 L1438.4 575.4 L1440.9 575.9 L1443.5 575.6 L1446.1 576.0 L1448.5 576.2 L1451.0 576.0 L1453.4 576.1 L1455.9 576.2 L1458.3 576.0 L1460.6 576.8 L1463.0 577.6 L1465.3 578.4 L1467.6 579.1 L1469.9 579.2 L1472.2 579.2 L1474.5 579.2 L1476.8 579.2 L1479.0 579.2 L1481.3 579.2 L1483.6 579.2 L1485.8 579.2 L1488.1 579.2 L1490.3 579.2 L1492.6 579.2 L1494.9 579.2 L1497.1 579.2 L1499.4 579.2 L1501.7 579.2 L1503.9 579.2 L1506.2 579.2 L1508.4 579.2 L1510.7 579.2 L1513.0 579.2 L1515.2 579.2 L1517.5 579.2 L1519.8 579.2 L1522.8 577.2 L1525.4 576.9 L1527.9 577.3 L1530.5 576.9 L1533.1 577.1 L1535.6 577.6 L1538.2 578.0 L1540.7 578.4 L1543.3 578.6 L1545.9 579.1 L1548.1 579.1 L1550.3 579.2 L1552.6 579.2 L1554.8 579.2 L1557.0 579.2 L1559.3 579.2 L1561.5 579.2 L1563.7 579.2 L1566.0 579.2 L1568.2 579.2 L1570.4 579.2 L1574.3 565.7 L1578.1 578.8 L1580.8 573.6 L1583.5 567.7 L1586.5 577.2 L1590.4 578.0 L1593.5 579.2 L1596.0 579.2 L1598.6 579.2 L1601.1 579.2 L1604.2 571.1 L1606.5 573.6 L1608.8 576.5 L1611.1 577.0 L1613.4 576.7 L1615.7 576.8 L1618.0 577.2 L1620.3 575.3 L1622.6 574.2 L1625.7 563.2 L1628.8 553.0 L1631.1 560.5 L1633.4 566.5 L1637.2 567.3 L1639.9 571.3 L1642.6 576.5 L1645.7 575.7 L1649.5 575.7 L1652.2 570.0 L1654.9 563.4 L1658.7 541.2 L1662.6 554.2 L1664.9 553.0 L1667.2 551.6 L1669.5 551.0 L1671.8 550.4 L1674.8 552.9 L1677.9 554.2 L1680.8 558.7 L1683.7 562.6 L1686.2 563.9 L1688.7 566.5 L1689.2 568.7 L1692.2 564.5 L1693.3 564.2 L1695.8 565.8 L1698.3 566.3 L1701.1 569.5 L1703.9 573.0 L1708.1 571.8 L1711.0 571.9 L1713.8 572.3 L1716.7 571.8 L1719.1 567.6 L1721.6 563.9 L1724.0 564.4 L1726.5 564.1 L1728.9 563.2 L1732.6 567.5 L1734.4 575.5 L1737.1 576.3 L1739.7 577.1 L1742.4 577.6 L1744.7 577.6 L1746.9 577.1 L1749.2 576.8 L1751.5 576.5 L1753.7 576.8 L1756.0 576.3 L1758.3 576.1 L1761.3 575.5 L1763.8 537.2 L1768.1 538.8 L1770.5 539.4 L1773.0 539.4 L1775.4 540.7 L1777.9 542.3 L1780.3 543.7 L1784.0 554.1 L1787.0 555.8 L1790.1 559.0 L1792.5 557.1 L1795.0 555.6 L1797.4 552.8 L1799.9 554.1 L1802.3 555.9 L1804.8 564.1 L1807.2 571.2 L1809.7 573.8 L1812.1 576.7 L1815.0 577.1 L1817.8 577.3 L1820.7 577.9 L1824.3 579.2 L1826.8 579.2 L1829.2 579.2 L1831.7 579.2 L1834.1 579.2 L1836.6 579.2 L1839.0 579.2 L1841.5 579.2 L1843.9 574.9 L1846.4 569.9 L1848.8 565.1 L1852.5 567.5 L1854.9 566.3 L1857.4 570.4 L1859.8 573.6 L1862.3 576.7 L1865.9 573.0 L1869.0 553.1 L1871.4 554.1 L1873.9 554.7 L1873.9 605.3 L1871.4 605.9 L1869.0 606.9 L1865.9 587.0 L1862.3 583.3 L1859.8 586.4 L1857.4 589.6 L1854.9 593.7 L1852.5 592.5 L1848.8 594.9 L1846.4 590.1 L1843.9 585.1 L1841.5 580.8 L1839.0 580.8 L1836.6 580.8 L1834.1 580.8 L1831.7 580.8 L1829.2 580.8 L1826.8 580.8 L1824.3 580.8 L1820.7 582.1 L1817.8 582.7 L1815.0 582.9 L1812.1 583.3 L1809.7 586.2 L1807.2 588.8 L1804.8 595.9 L1802.3 604.1 L1799.9 605.9 L1797.4 607.2 L1795.0 604.4 L1792.5 602.9 L1790.1 601.0 L1787.0 604.2 L1784.0 605.9 L1780.3 616.3 L1777.9 617.7 L1775.4 619.3 L1773.0 620.6 L1770.5 620.6 L1768.1 621.2 L1763.8 622.8 L1761.3 584.5 L1758.3 583.9 L1756.0 583.7 L1753.7 583.2 L1751.5 583.5 L1749.2 583.2 L1746.9 582.9 L1744.7 582.4 L1742.4 582.4 L1739.7 582.9 L1737.1 583.7 L1734.4 584.5 L1732.6 592.5 L1728.9 596.8 L1726.5 595.9 L1724.0 595.6 L1721.6 596.1 L1719.1 592.4 L1716.7 588.2 L1713.8 587.7 L1711.0 588.1 L1708.1 588.2 L1703.9 587.0 L1701.1 590.5 L1698.3 593.7 L1695.8 594.2 L1693.3 595.8 L1692.2 595.5 L1689.2 591.3 L1688.7 593.5 L1686.2 596.1 L1683.7 597.4 L1680.8 601.3 L1677.9 605.8 L1674.8 607.1 L1671.8 609.6 L1669.5 609.0 L1667.2 608.4 L1664.9 607.0 L1662.6 605.8 L1658.7 618.8 L1654.9 596.6 L1652.2 590.0 L1649.5 584.3 L1645.7 584.3 L1642.6 583.5 L1639.9 588.7 L1637.2 592.7 L1633.4 593.5 L1631.1 599.5 L1628.8 607.0 L1625.7 596.8 L1622.6 585.8 L1620.3 584.7 L1618.0 582.8 L1615.7 583.2 L1613.4 583.3 L1611.1 583.0 L1608.8 583.5 L1606.5 586.4 L1604.2 588.9 L1601.1 580.8 L1598.6 580.8 L1596.0 580.8 L1593.5 580.8 L1590.4 582.0 L1586.5 582.8 L1583.5 592.3 L1580.8 586.4 L1578.1 581.2 L1574.3 594.3 L1570.4 580.8 L1568.2 580.8 L1566.0 580.8 L1563.7 580.8 L1561.5 580.8 L1559.3 580.8 L1557.0 580.8 L1554.8 580.8 L1552.6 580.8 L1550.3 580.8 L1548.1 580.9 L1545.9 580.9 L1543.3 581.4 L1540.7 581.6 L1538.2 582.0 L1535.6 582.4 L1533.1 582.9 L1530.5 583.1 L1527.9 582.7 L1525.4 583.1 L1522.8 582.8 L1519.8 580.8 L1517.5 580.8 L1515.2 580.8 L1513.0 580.8 L1510.7 580.8 L1508.4 580.8 L1506.2 580.8 L1503.9 580.8 L1501.7 580.8 L1499.4 580.8 L1497.1 580.8 L1494.9 580.8 L1492.6 580.8 L1490.3 580.8 L1488.1 580.8 L1485.8 580.8 L1483.6 580.8 L1481.3 580.8 L1479.0 580.8 L1476.8 580.8 L1474.5 580.8 L1472.2 580.8 L1469.9 580.8 L1467.6 580.9 L1465.3 581.6 L1463.0 582.4 L1460.6 583.2 L1458.3 584.0 L1455.9 583.8 L1453.4 583.9 L1451.0 584.0 L1448.5 583.8 L1446.1 584.0 L1443.5 584.4 L1440.9 584.1 L1438.4 584.6 L1435.7 585.2 L1433.0 585.5 L1430.3 585.9 L1427.6 586.1 L1425.3 585.6 L1423.0 585.2 L1420.7 584.3 L1418.4 584.0 L1416.1 583.7 L1413.8 582.6 L1411.5 582.0 L1409.2 581.5 L1406.9 581.3 L1404.6 581.3 L1402.3 581.2 L1400.0 580.9 L1398.7 581.2 L1396.1 582.2 L1393.5 583.3 L1391.0 583.9 L1388.4 585.7 L1385.9 586.7 L1383.3 587.4 L1380.8 588.3 L1378.4 589.7 L1375.9 591.2 L1373.5 591.7 L1371.0 593.5 L1368.3 595.8 L1365.6 597.8 L1363.0 600.4 L1360.3 602.7 L1357.8 602.6 L1355.4 600.6 L1352.9 599.8 L1350.4 599.0 L1348.0 598.1 L1344.9 597.4 L1341.8 595.0 L1339.2 598.7 L1336.5 603.3 L1333.8 607.8 L1331.1 611.2 L1328.0 613.4 L1325.0 614.2 L1321.9 596.6 L1318.8 583.5 L1315.7 587.4 L1312.7 591.0 L1309.6 595.0 L1307.3 593.1 L1305.0 589.7 L1302.7 591.3 L1300.4 593.5 L1297.3 590.8 L1294.2 588.9 L1291.7 588.3 L1289.1 587.7 L1286.6 587.4 L1284.3 587.9 L1282.0 587.6 L1279.7 587.4 L1275.8 594.3 L1273.5 591.4 L1271.2 589.7 L1268.7 592.2 L1266.1 594.4 L1263.5 596.6 L1260.9 598.1 L1258.2 600.0 L1255.5 603.5 L1252.8 605.0 L1250.5 604.8 L1248.2 605.0 L1245.5 605.0 L1242.8 605.4 L1240.1 605.2 L1237.4 604.3 L1235.1 608.7 L1232.8 613.1 L1230.5 617.3 L1228.2 614.2 L1225.9 616.2 L1223.6 619.3 L1220.9 601.6 L1218.2 584.3 L1215.6 588.4 L1212.9 592.0 L1209.0 598.9 L1205.2 595.0 L1202.5 597.9 L1199.8 599.7 L1197.1 594.9 L1194.4 590.4 L1191.9 589.9 L1189.3 589.1 L1186.8 587.4 L1184.5 585.9 L1182.2 584.3 L1179.1 587.9 L1176.0 592.0 L1173.7 594.0 L1171.4 595.8 L1168.9 592.6 L1166.3 590.9 L1163.7 588.1 L1161.2 587.3 L1158.6 587.7 L1156.1 588.3 L1153.5 587.0 L1150.9 587.4 L1148.4 587.4 L1145.3 592.0 L1143.0 592.8 L1140.7 594.3 L1137.6 592.7 L1135.1 594.4 L1132.5 595.5 L1130.0 598.1 L1126.9 602.6 L1123.8 605.8 L1121.5 606.5 L1119.2 608.1 L1115.8 613.5 L1115.6 613.5 L1112.3 587.4 L1111.7 587.4 L1108.7 580.0 L1105.6 585.8 L1102.5 587.5 L1099.4 588.9 L1095.6 598.9 L1092.9 590.6 L1090.2 582.0 L1087.9 584.6 L1085.6 587.4 L1083.3 610.4 L1079.5 580.8 L1077.2 580.8 L1074.9 580.8 L1072.6 580.8 L1070.3 580.9 L1068.0 581.1 L1065.7 581.2 L1063.1 581.6 L1060.5 582.1 L1058.0 582.8 L1055.4 582.8 L1052.9 583.2 L1050.3 583.1 L1047.7 583.7 L1045.2 583.9 L1042.6 584.0 L1039.9 583.9 L1037.3 584.4 L1034.6 584.4 L1031.9 584.6 L1029.4 584.2 L1027.0 583.9 L1024.5 584.4 L1022.1 584.2 L1019.6 584.0 L1017.0 584.1 L1014.5 583.9 L1011.9 583.7 L1009.4 583.8 L1006.8 583.7 L1004.2 583.5 L1001.7 583.5 L999.1 582.8 L996.6 582.9 L994.0 582.6 L991.5 582.3 L988.9 582.0 L986.3 581.7 L983.8 581.6 L981.2 581.3 L978.7 580.9 L976.1 580.8 L973.5 580.8 L972.5 580.0 L947.7 580.0 L947.4 580.8 L945.2 580.8 L943.0 580.8 L940.8 580.8 L938.6 580.8 L936.3 581.0 L934.1 581.0 L931.9 581.0 L929.7 581.2 L927.5 581.2 L924.9 582.4 L922.4 583.4 L919.8 584.3 L917.2 588.2 L914.7 593.0 L912.1 596.6 L909.8 598.7 L907.5 600.4 L905.2 601.3 L902.9 601.1 L900.6 601.8 L898.3 602.0 L896.0 599.4 L893.7 597.8 L891.4 594.8 L889.1 593.5 L886.4 593.6 L883.7 593.8 L881.0 594.2 L878.3 593.5 L875.9 593.8 L873.4 595.0 L871.0 595.8 L868.5 595.9 L866.1 596.6 L863.5 596.0 L860.9 596.4 L858.4 595.8 L856.1 595.8 L853.8 596.6 L851.5 596.7 L849.2 596.6 L846.1 599.6 L843.0 602.0 L840.5 603.9 L837.9 605.5 L835.4 606.6 L832.8 605.3 L830.2 605.1 L827.7 603.5 L824.7 603.2 L821.7 602.0 L820.0 602.0 L817.0 603.5 L814.0 605.8 L811.5 607.7 L808.9 610.7 L806.4 613.5 L804.1 617.5 L801.8 621.5 L798.7 622.1 L795.6 622.4 L793.3 622.0 L791.0 621.0 L788.7 619.0 L786.4 618.1 L783.3 599.9 L780.3 582.8 L777.6 582.1 L774.9 581.5 L772.2 581.0 L769.5 580.8 L767.0 582.6 L764.4 584.5 L761.8 586.6 L759.4 587.1 L756.9 588.6 L754.5 589.0 L752.0 589.9 L749.6 589.7 L747.0 589.9 L744.4 589.9 L741.9 590.4 L738.8 585.1 L735.7 584.3 L732.7 588.7 L729.6 592.0 L727.3 593.9 L725.0 596.9 L722.3 597.3 L719.6 597.3 L716.9 598.8 L714.2 598.9 L711.6 600.1 L708.9 601.5 L706.2 602.1 L703.5 602.7 L701.2 602.3 L698.9 603.6 L696.6 603.3 L694.3 603.5 L692.0 598.3 L689.7 595.3 L687.4 589.5 L685.1 585.8 L682.5 585.0 L680.0 584.3 L677.4 583.5 L675.0 583.5 L672.6 583.2 L670.2 582.7 L667.7 582.6 L665.3 582.5 L662.9 582.4 L660.5 582.0 L658.2 581.7 L655.9 581.7 L653.6 581.9 L651.3 581.8 L649.0 581.5 L646.7 581.5 L644.1 582.2 L641.6 583.2 L639.0 584.3 L636.7 594.8 L634.4 605.8 L631.3 611.2 L628.8 612.0 L626.2 613.6 L623.7 614.7 L621.2 613.2 L618.7 610.0 L616.2 608.7 L613.7 605.8 L611.4 594.3 L608.3 605.8 L606.0 608.3 L603.7 610.4 L601.4 611.8 L599.1 613.0 L596.8 616.0 L594.5 616.8 L591.8 614.5 L589.1 614.2 L586.4 612.5 L583.7 610.4 L581.2 610.3 L578.6 608.8 L576.1 608.9 L573.5 608.8 L570.9 607.9 L568.4 607.3 L566.1 608.4 L563.8 609.8 L561.5 612.1 L559.2 612.7 L556.1 615.7 L553.0 617.3 L550.5 620.3 L547.9 621.9 L545.4 625.0 L542.8 622.9 L540.2 618.8 L537.7 616.5 L534.6 590.4 L532.3 593.5 L530.0 582.8 L528.7 580.8 L526.4 580.8 L524.0 580.8 L521.7 580.8 L519.4 580.8 L517.1 580.8 L514.8 580.8 L512.5 580.9 L510.2 580.9 L507.9 581.0 L505.6 580.8 L503.3 581.0 L501.0 580.9 L498.5 581.2 L495.9 581.7 L493.3 582.0 L490.3 587.0 L487.2 592.0 L484.9 600.1 L482.6 608.9 L479.5 614.6 L476.5 620.4 L473.9 619.6 L471.3 617.5 L468.8 616.5 L465.7 617.3 L463.4 599.7 L461.1 598.9 L458.8 599.0 L456.5 597.5 L454.2 598.0 L451.9 597.3 L449.6 596.6 L447.3 595.9 L445.0 595.6 L442.7 595.8 L440.4 594.7 L438.1 594.4 L435.8 593.8 L433.5 593.5 L431.2 593.9 L428.9 593.9 L426.5 593.2 L424.2 592.7 L422.7 598.1 L420.4 601.9 L418.1 604.3 L415.0 605.7 L412.0 608.1 L408.9 608.8 L405.8 608.9 L403.5 596.6 L401.2 584.3 L398.9 587.2 L396.6 588.9 L394.3 590.9 L392.0 593.5 L388.9 592.0 L385.9 594.3 L383.6 591.2 L380.5 597.3 L378.2 595.1 L375.9 592.5 L373.6 588.9 L371.3 586.6 L369.0 585.1 L365.9 590.4 L363.6 591.5 L361.3 593.5 L358.6 596.0 L355.9 596.6 L353.2 598.7 L350.5 601.2 L347.5 605.2 L344.4 608.9 L341.7 612.1 L339.0 616.5 L336.7 600.9 L334.4 584.3 L332.1 582.8 L329.1 584.0 L326.0 585.8 L322.9 587.4 L320.6 587.4 L318.3 587.2 L316.0 585.9 L313.7 585.5 L311.4 584.9 L309.1 585.1 L306.8 584.9 L304.5 584.7 L302.2 584.3 L299.9 584.3 L297.3 585.3 L294.8 585.9 L292.2 587.4 L289.6 589.5 L287.1 590.7 L284.5 592.0 L281.5 596.6 L279.2 597.7 L276.8 597.3 L274.3 596.8 L271.7 595.6 L269.2 595.8 L266.9 596.7 L264.6 596.6 L262.3 597.1 L260.0 596.6 L257.7 600.5 L255.4 603.5 L252.3 606.6 L249.2 608.9 L246.6 611.7 L244.0 614.2Z"/>
<path clip-path="url(#co)" fill="#7a68f5" d="M244.0 834.3 L246.6 837.2 L249.2 838.9 L251.9 843.5 L254.6 845.8 L256.9 849.6 L259.2 854.3 L263.0 856.6 L265.6 858.2 L268.1 857.0 L270.7 857.3 L273.3 857.0 L275.8 857.2 L278.4 855.0 L281.5 858.5 L284.5 862.0 L287.1 865.5 L289.6 866.3 L292.2 868.1 L295.3 870.9 L298.3 871.2 L301.0 872.0 L303.7 871.0 L306.4 869.8 L309.1 870.4 L311.8 870.9 L314.5 870.1 L317.2 868.3 L319.8 868.1 L322.9 865.9 L326.0 866.6 L328.3 869.8 L330.6 873.5 L334.0 873.5 L336.5 852.3 L339.0 830.5 L341.7 833.9 L344.4 840.5 L347.5 845.7 L350.5 848.1 L352.9 848.9 L355.2 852.6 L357.5 855.0 L359.8 855.8 L362.3 859.6 L364.9 861.5 L367.4 863.5 L369.7 870.4 L372.4 865.9 L375.1 863.5 L377.8 860.3 L380.5 855.0 L384.3 860.4 L387.4 858.9 L390.5 860.2 L393.5 862.0 L396.6 863.8 L399.7 866.6 L402.0 871.9 L404.7 856.2 L407.4 839.7 L409.9 840.6 L412.5 843.1 L415.0 842.8 L418.1 847.6 L421.2 849.7 L424.2 861.2 L426.8 861.9 L429.4 860.1 L431.9 860.4 L434.5 860.1 L437.0 860.0 L439.6 858.9 L442.2 858.1 L444.7 858.0 L447.3 857.3 L449.8 857.2 L452.4 854.9 L455.0 854.4 L457.5 855.1 L460.1 853.3 L462.6 852.7 L466.5 829.7 L470.3 828.2 L473.4 826.9 L476.5 825.9 L478.8 832.0 L481.1 840.5 L484.1 852.0 L487.2 865.0 L490.3 867.2 L493.3 868.1 L496.4 870.0 L499.5 874.2 L501.8 874.8 L504.1 874.7 L506.4 874.6 L508.7 875.0 L511.0 875.4 L513.3 875.4 L515.6 875.8 L517.9 875.6 L520.2 875.8 L522.5 876.1 L525.0 876.2 L527.5 876.2 L530.0 876.2 L532.3 876.2 L534.6 876.2 L536.9 876.2 L539.2 876.2 L541.5 876.2 L543.8 860.4 L546.9 865.0 L550.0 831.2 L553.0 826.0 L556.1 820.5 L558.8 822.5 L561.5 825.2 L564.2 829.8 L566.8 832.8 L569.4 834.8 L572.0 839.3 L574.5 840.5 L576.8 839.8 L579.1 840.0 L581.4 838.9 L583.7 840.5 L586.3 838.9 L588.9 840.1 L591.4 838.9 L594.1 837.4 L596.8 834.5 L599.5 834.7 L602.2 831.2 L604.7 835.5 L607.3 840.5 L609.8 843.5 L612.1 848.2 L614.4 851.8 L616.7 853.0 L619.1 857.3 L621.4 850.1 L623.7 840.5 L626.2 839.2 L628.8 836.7 L631.3 834.3 L634.4 839.3 L637.5 846.6 L639.8 854.5 L642.1 859.8 L644.4 866.0 L646.7 872.7 L649.8 872.9 L652.8 874.2 L655.4 874.2 L657.9 874.4 L660.5 875.0 L662.9 875.1 L665.3 874.9 L667.7 874.9 L670.2 874.4 L672.6 874.2 L675.0 874.9 L677.4 874.5 L680.5 874.1 L683.5 872.7 L685.8 872.5 L688.1 871.8 L690.4 870.4 L692.8 869.6 L695.8 852.7 L698.9 850.2 L702.0 848.1 L704.7 848.9 L707.3 849.7 L710.0 848.4 L712.7 848.1 L715.0 849.7 L717.3 850.2 L719.6 850.1 L721.9 852.7 L724.5 853.2 L727.0 854.7 L729.6 855.8 L732.2 858.0 L734.7 860.4 L737.3 863.5 L739.8 867.5 L742.4 867.3 L745.0 871.2 L747.3 866.8 L749.6 864.3 L752.1 863.6 L754.7 864.3 L757.2 865.8 L759.7 866.9 L762.2 867.7 L764.6 869.4 L767.1 868.4 L769.5 869.6 L772.6 872.8 L775.7 874.2 L778.0 874.4 L780.3 873.9 L782.6 873.6 L784.9 872.7 L787.9 851.7 L791.0 829.7 L793.3 829.8 L795.6 828.6 L797.9 826.8 L800.2 824.3 L802.5 825.8 L804.8 825.2 L807.1 826.4 L809.4 825.1 L811.7 828.5 L814.0 834.3 L817.0 839.3 L820.0 845.1 L821.7 845.1 L824.2 847.7 L826.7 848.9 L829.2 849.7 L831.5 848.6 L833.8 847.0 L836.1 846.3 L838.4 843.5 L841.0 843.7 L843.5 844.5 L846.1 847.4 L848.7 849.8 L851.2 852.0 L853.8 854.3 L856.5 856.6 L859.2 857.5 L861.8 857.7 L864.5 858.1 L866.9 859.0 L869.4 857.3 L871.8 859.5 L874.2 860.1 L876.6 857.2 L879.0 858.7 L881.4 858.9 L883.7 860.4 L886.0 859.5 L888.3 861.5 L890.6 860.4 L893.7 858.8 L896.8 857.3 L899.8 852.0 L902.9 849.7 L905.5 848.8 L908.0 849.6 L910.6 850.4 L913.7 853.9 L916.7 855.8 L919.0 860.1 L921.3 864.6 L923.6 866.5 L925.9 871.2 L929.0 873.0 L932.1 875.0 L934.8 875.1 L937.5 875.6 L940.1 875.9 L942.8 876.1 L945.4 876.1 L947.9 876.1 L950.5 876.2 L953.1 876.2 L955.6 876.2 L958.2 876.2 L960.7 876.2 L963.3 876.2 L965.9 876.2 L968.4 876.2 L971.0 876.2 L973.5 876.2 L976.1 876.2 L978.7 876.2 L981.2 876.2 L983.8 876.2 L986.3 876.0 L988.9 876.1 L991.5 875.8 L994.0 875.2 L996.6 874.8 L999.1 874.5 L1001.7 874.7 L1004.2 874.2 L1006.8 874.4 L1009.4 874.3 L1011.9 874.2 L1014.5 874.1 L1017.0 873.4 L1019.6 873.5 L1021.9 872.7 L1024.2 872.6 L1026.5 872.9 L1028.8 872.4 L1031.1 872.0 L1033.4 873.1 L1035.7 871.8 L1038.0 871.9 L1040.5 871.5 L1042.9 872.0 L1045.4 872.4 L1047.9 873.2 L1050.3 873.5 L1052.6 874.4 L1054.9 874.2 L1057.2 875.1 L1059.5 875.5 L1062.0 875.4 L1064.4 875.5 L1066.9 875.9 L1069.3 876.0 L1071.8 876.1 L1074.9 840.5 L1077.9 869.6 L1081.0 871.5 L1084.1 875.0 L1087.2 853.5 L1090.2 860.8 L1093.3 869.6 L1096.4 871.9 L1099.4 872.7 L1102.0 861.6 L1104.6 849.3 L1107.1 835.9 L1110.0 842.0 L1113.1 842.2 L1116.1 845.1 L1119.2 848.7 L1122.3 854.3 L1124.8 857.5 L1127.4 857.3 L1130.0 860.4 L1133.0 858.9 L1135.6 860.2 L1138.1 864.0 L1140.7 867.3 L1143.4 867.6 L1146.1 866.8 L1148.8 867.9 L1151.5 866.6 L1154.5 867.3 L1157.6 865.0 L1160.7 859.7 L1163.7 857.3 L1166.0 859.2 L1168.3 862.0 L1171.4 866.1 L1174.5 870.4 L1176.8 867.7 L1179.1 867.9 L1181.4 865.2 L1183.7 865.0 L1186.3 860.4 L1188.8 858.8 L1191.4 854.3 L1193.7 856.6 L1196.0 857.3 L1199.1 856.5 L1202.1 854.3 L1205.2 864.3 L1208.3 872.7 L1211.3 871.2 L1213.6 849.0 L1215.9 827.4 L1218.2 830.1 L1220.5 831.2 L1222.9 836.9 L1225.2 842.0 L1227.7 845.0 L1230.3 844.3 L1232.8 847.4 L1235.4 847.6 L1237.9 847.0 L1240.5 846.6 L1242.8 845.9 L1245.1 845.8 L1247.7 846.8 L1250.2 850.7 L1252.8 852.7 L1255.1 854.5 L1257.4 858.9 L1259.7 861.9 L1262.0 865.0 L1264.3 861.9 L1266.6 858.9 L1268.9 865.0 L1271.2 868.1 L1273.8 868.0 L1276.3 868.6 L1278.9 867.3 L1281.5 868.1 L1284.0 864.8 L1286.6 865.0 L1289.1 865.6 L1291.7 864.1 L1294.2 863.5 L1296.8 861.2 L1299.4 860.2 L1301.9 858.9 L1304.2 863.3 L1306.5 866.6 L1308.8 869.6 L1311.1 872.7 L1314.2 866.6 L1316.5 848.7 L1318.8 831.2 L1321.9 834.2 L1325.0 838.9 L1327.3 843.8 L1329.6 846.0 L1331.9 850.7 L1334.2 853.5 L1336.7 853.7 L1339.3 851.6 L1341.8 852.0 L1344.1 847.7 L1346.5 843.5 L1348.8 844.9 L1351.1 845.8 L1353.4 846.8 L1355.7 849.7 L1358.2 852.4 L1360.8 854.4 L1363.3 857.3 L1365.9 859.9 L1368.5 862.4 L1371.0 865.0 L1373.3 865.2 L1375.6 866.7 L1377.9 867.2 L1380.2 868.2 L1382.5 867.4 L1384.8 869.6 L1387.1 870.5 L1389.4 871.6 L1391.7 873.1 L1394.0 875.0 L1397.0 875.5 L1400.0 875.8 L1402.6 875.3 L1405.1 874.7 L1407.7 874.3 L1410.2 874.6 L1412.8 874.3 L1415.4 873.5 L1418.0 872.5 L1420.7 872.4 L1423.4 871.0 L1426.1 869.3 L1428.6 870.9 L1431.0 869.6 L1433.5 869.7 L1435.9 869.8 L1438.4 871.2 L1440.9 872.2 L1443.5 871.2 L1446.1 871.9 L1448.7 871.8 L1451.4 873.0 L1454.1 871.8 L1456.8 872.7 L1459.4 873.1 L1461.9 875.0 L1464.5 875.8 L1466.9 875.8 L1469.4 876.2 L1471.9 876.2 L1474.3 876.2 L1476.8 876.2 L1479.1 876.2 L1481.4 876.2 L1483.7 876.2 L1486.0 876.2 L1488.3 876.2 L1490.6 876.2 L1492.9 876.2 L1495.2 876.2 L1497.5 876.2 L1499.8 876.2 L1502.1 876.2 L1504.4 876.2 L1506.7 876.2 L1509.0 875.9 L1511.3 875.4 L1513.6 875.0 L1515.9 875.1 L1518.2 874.2 L1520.7 873.7 L1523.1 873.9 L1525.6 873.7 L1528.1 874.7 L1530.5 874.2 L1533.1 874.7 L1535.6 875.2 L1538.2 874.8 L1540.7 875.4 L1543.3 875.7 L1545.9 875.8 L1548.4 876.0 L1551.0 875.9 L1553.5 876.1 L1556.1 876.2 L1558.7 876.2 L1561.2 876.2 L1563.8 876.2 L1566.3 876.1 L1568.9 875.8 L1572.0 858.9 L1575.0 875.8 L1577.3 868.2 L1579.6 862.0 L1582.7 874.2 L1585.0 874.9 L1587.3 875.0 L1589.6 874.6 L1591.9 875.0 L1594.5 875.3 L1597.0 875.8 L1599.6 875.8 L1601.1 866.6 L1604.2 874.2 L1606.9 873.8 L1609.6 874.1 L1612.3 873.9 L1615.0 874.2 L1618.0 872.8 L1621.1 869.6 L1623.8 855.8 L1626.5 844.3 L1630.3 857.3 L1633.4 864.9 L1636.5 869.6 L1638.8 869.7 L1641.1 871.7 L1643.4 872.8 L1645.7 873.5 L1648.7 869.1 L1651.8 865.0 L1654.1 845.2 L1656.4 828.2 L1658.7 834.3 L1661.0 838.9 L1663.6 840.4 L1666.1 839.3 L1668.7 839.7 L1671.8 844.0 L1674.8 846.6 L1677.4 850.9 L1680.0 852.7 L1682.8 859.2 L1685.6 863.5 L1687.1 863.4 L1691.4 859.2 L1691.7 858.9 L1694.1 862.5 L1696.6 864.3 L1699.0 866.1 L1701.4 867.7 L1703.8 868.1 L1706.2 866.4 L1708.6 867.0 L1710.9 867.9 L1713.3 867.5 L1715.7 867.7 L1720.0 856.3 L1722.4 857.6 L1724.7 857.3 L1727.1 857.0 L1731.4 871.3 L1734.2 873.2 L1737.1 873.6 L1740.0 874.1 L1742.3 874.6 L1744.6 873.5 L1746.9 873.5 L1749.2 873.9 L1751.6 873.3 L1753.9 872.4 L1756.2 873.5 L1758.5 872.7 L1762.1 823.5 L1765.3 823.2 L1768.5 824.9 L1771.4 828.7 L1774.2 832.0 L1777.1 835.6 L1779.9 840.0 L1782.8 846.9 L1785.6 852.0 L1788.5 849.1 L1791.3 845.7 L1794.2 843.5 L1796.7 846.9 L1799.2 853.9 L1801.7 857.4 L1804.2 863.4 L1806.7 865.5 L1809.2 868.4 L1811.7 871.7 L1814.2 874.1 L1817.0 874.3 L1819.9 874.7 L1822.8 874.1 L1825.6 875.0 L1828.5 875.4 L1831.3 875.6 L1834.2 876.0 L1837.0 876.2 L1839.5 876.2 L1842.0 876.2 L1844.5 876.2 L1847.0 876.2 L1849.9 869.9 L1852.3 865.0 L1854.6 861.1 L1857.0 858.4 L1859.9 861.5 L1862.7 866.3 L1865.6 869.1 L1868.4 871.6 L1871.3 872.7 L1874.0 869.1 L1874.0 884.9 L1871.3 881.3 L1868.4 882.4 L1865.6 884.9 L1862.7 887.7 L1859.9 892.5 L1857.0 895.6 L1854.6 892.9 L1852.3 889.0 L1849.9 884.1 L1847.0 877.8 L1844.5 877.8 L1842.0 877.8 L1839.5 877.8 L1837.0 877.8 L1834.2 878.0 L1831.3 878.4 L1828.5 878.6 L1825.6 879.0 L1822.8 879.9 L1819.9 879.3 L1817.0 879.7 L1814.2 879.9 L1811.7 882.3 L1809.2 885.6 L1806.7 888.5 L1804.2 890.6 L1801.7 896.6 L1799.2 900.1 L1796.7 907.1 L1794.2 910.5 L1791.3 908.3 L1788.5 904.9 L1785.6 902.0 L1782.8 907.1 L1779.9 914.0 L1777.1 918.4 L1774.2 922.0 L1771.4 925.3 L1768.5 929.1 L1765.3 930.8 L1762.1 930.5 L1758.5 881.3 L1756.2 880.5 L1753.9 881.6 L1751.6 880.7 L1749.2 880.1 L1746.9 880.5 L1744.6 880.5 L1742.3 879.4 L1740.0 879.9 L1737.1 880.4 L1734.2 880.8 L1731.4 882.7 L1727.1 897.0 L1724.7 896.7 L1722.4 896.4 L1720.0 897.7 L1715.7 886.3 L1713.3 886.5 L1710.9 886.1 L1708.6 887.0 L1706.2 887.6 L1703.8 885.9 L1701.4 886.3 L1699.0 887.9 L1696.6 889.7 L1694.1 891.5 L1691.7 895.1 L1691.4 894.8 L1687.1 890.6 L1685.6 890.5 L1682.8 894.8 L1680.0 901.3 L1677.4 903.1 L1674.8 907.4 L1671.8 910.0 L1668.7 914.3 L1666.1 914.7 L1663.6 913.6 L1661.0 915.1 L1658.7 919.7 L1656.4 925.8 L1654.1 908.8 L1651.8 889.0 L1648.7 884.9 L1645.7 880.5 L1643.4 881.2 L1641.1 882.3 L1638.8 884.3 L1636.5 884.4 L1633.4 889.1 L1630.3 896.7 L1626.5 909.7 L1623.8 898.2 L1621.1 884.4 L1618.0 881.2 L1615.0 879.8 L1612.3 880.1 L1609.6 879.9 L1606.9 880.2 L1604.2 879.8 L1601.1 887.4 L1599.6 878.2 L1597.0 878.2 L1594.5 878.7 L1591.9 879.0 L1589.6 879.4 L1587.3 879.0 L1585.0 879.1 L1582.7 879.8 L1579.6 892.0 L1577.3 885.8 L1575.0 878.2 L1572.0 895.1 L1568.9 878.2 L1566.3 877.9 L1563.8 877.8 L1561.2 877.8 L1558.7 877.8 L1556.1 877.8 L1553.5 877.9 L1551.0 878.1 L1548.4 878.0 L1545.9 878.2 L1543.3 878.3 L1540.7 878.6 L1538.2 879.2 L1535.6 878.8 L1533.1 879.3 L1530.5 879.8 L1528.1 879.3 L1525.6 880.3 L1523.1 880.1 L1520.7 880.3 L1518.2 879.8 L1515.9 878.9 L1513.6 879.0 L1511.3 878.6 L1509.0 878.1 L1506.7 877.8 L1504.4 877.8 L1502.1 877.8 L1499.8 877.8 L1497.5 877.8 L1495.2 877.8 L1492.9 877.8 L1490.6 877.8 L1488.3 877.8 L1486.0 877.8 L1483.7 877.8 L1481.4 877.8 L1479.1 877.8 L1476.8 877.8 L1474.3 877.8 L1471.9 877.8 L1469.4 877.8 L1466.9 878.2 L1464.5 878.2 L1461.9 879.0 L1459.4 880.9 L1456.8 881.3 L1454.1 882.2 L1451.4 881.0 L1448.7 882.2 L1446.1 882.1 L1443.5 882.8 L1440.9 881.8 L1438.4 882.8 L1435.9 884.2 L1433.5 884.3 L1431.0 884.4 L1428.6 883.1 L1426.1 884.7 L1423.4 883.0 L1420.7 881.6 L1418.0 881.5 L1415.4 880.5 L1412.8 879.7 L1410.2 879.4 L1407.7 879.7 L1405.1 879.3 L1402.6 878.7 L1400.0 878.2 L1397.0 878.5 L1394.0 879.0 L1391.7 880.9 L1389.4 882.4 L1387.1 883.5 L1384.8 884.4 L1382.5 886.6 L1380.2 885.8 L1377.9 886.8 L1375.6 887.3 L1373.3 888.8 L1371.0 889.0 L1368.5 891.6 L1365.9 894.1 L1363.3 896.7 L1360.8 899.6 L1358.2 901.6 L1355.7 904.3 L1353.4 907.2 L1351.1 908.2 L1348.8 909.1 L1346.5 910.5 L1344.1 906.3 L1341.8 902.0 L1339.3 902.4 L1336.7 900.3 L1334.2 900.5 L1331.9 903.3 L1329.6 908.0 L1327.3 910.2 L1325.0 915.1 L1321.9 919.8 L1318.8 922.8 L1316.5 905.3 L1314.2 887.4 L1311.1 881.3 L1308.8 884.4 L1306.5 887.4 L1304.2 890.7 L1301.9 895.1 L1299.4 893.8 L1296.8 892.8 L1294.2 890.5 L1291.7 889.9 L1289.1 888.4 L1286.6 889.0 L1284.0 889.2 L1281.5 885.9 L1278.9 886.7 L1276.3 885.4 L1273.8 886.0 L1271.2 885.9 L1268.9 889.0 L1266.6 895.1 L1264.3 892.1 L1262.0 889.0 L1259.7 892.1 L1257.4 895.1 L1255.1 899.5 L1252.8 901.3 L1250.2 903.3 L1247.7 907.2 L1245.1 908.2 L1242.8 908.1 L1240.5 907.4 L1237.9 907.0 L1235.4 906.4 L1232.8 906.6 L1230.3 909.7 L1227.7 909.0 L1225.2 912.0 L1222.9 917.1 L1220.5 922.8 L1218.2 923.9 L1215.9 926.6 L1213.6 905.0 L1211.3 882.8 L1208.3 881.3 L1205.2 889.7 L1202.1 899.7 L1199.1 897.5 L1196.0 896.7 L1193.7 897.4 L1191.4 899.7 L1188.8 895.2 L1186.3 893.6 L1183.7 889.0 L1181.4 888.8 L1179.1 886.1 L1176.8 886.3 L1174.5 883.6 L1171.4 887.9 L1168.3 892.0 L1166.0 894.8 L1163.7 896.7 L1160.7 894.3 L1157.6 889.0 L1154.5 886.7 L1151.5 887.4 L1148.8 886.1 L1146.1 887.2 L1143.4 886.4 L1140.7 886.7 L1138.1 890.0 L1135.6 893.8 L1133.0 895.1 L1130.0 893.6 L1127.4 896.7 L1124.8 896.5 L1122.3 899.7 L1119.2 905.3 L1116.1 908.9 L1113.1 911.8 L1110.0 912.0 L1107.1 918.1 L1104.6 904.7 L1102.0 892.4 L1099.4 881.3 L1096.4 882.1 L1093.3 884.4 L1090.2 893.2 L1087.2 900.5 L1084.1 879.0 L1081.0 882.5 L1077.9 884.4 L1074.9 913.5 L1071.8 877.9 L1069.3 878.0 L1066.9 878.1 L1064.4 878.5 L1062.0 878.6 L1059.5 878.5 L1057.2 878.9 L1054.9 879.8 L1052.6 879.6 L1050.3 880.5 L1047.9 880.8 L1045.4 881.6 L1042.9 882.0 L1040.5 882.5 L1038.0 882.1 L1035.7 882.2 L1033.4 880.9 L1031.1 882.0 L1028.8 881.6 L1026.5 881.1 L1024.2 881.4 L1021.9 881.3 L1019.6 880.5 L1017.0 880.6 L1014.5 879.9 L1011.9 879.8 L1009.4 879.7 L1006.8 879.6 L1004.2 879.8 L1001.7 879.3 L999.1 879.5 L996.6 879.2 L994.0 878.8 L991.5 878.2 L988.9 877.9 L986.3 878.0 L983.8 877.8 L981.2 877.8 L978.7 877.8 L976.1 877.8 L973.5 877.8 L971.0 877.8 L968.4 877.8 L965.9 877.8 L963.3 877.8 L960.7 877.8 L958.2 877.8 L955.6 877.8 L953.1 877.8 L950.5 877.8 L947.9 877.9 L945.4 877.9 L942.8 877.9 L940.1 878.1 L937.5 878.4 L934.8 878.9 L932.1 879.0 L929.0 881.0 L925.9 882.8 L923.6 887.5 L921.3 889.4 L919.0 893.9 L916.7 898.2 L913.7 900.1 L910.6 903.6 L908.0 904.4 L905.5 905.2 L902.9 904.3 L899.8 902.0 L896.8 896.7 L893.7 895.2 L890.6 893.6 L888.3 892.5 L886.0 894.5 L883.7 893.6 L881.4 895.1 L879.0 895.3 L876.6 896.8 L874.2 893.9 L871.8 894.5 L869.4 896.7 L866.9 895.0 L864.5 895.9 L861.8 896.3 L859.2 896.5 L856.5 897.4 L853.8 899.7 L851.2 902.0 L848.7 904.2 L846.1 906.6 L843.5 909.5 L841.0 910.3 L838.4 910.5 L836.1 907.7 L833.8 907.0 L831.5 905.4 L829.2 904.3 L826.7 905.1 L824.2 906.3 L821.7 908.9 L820.0 908.9 L817.0 914.7 L814.0 919.7 L811.7 925.5 L809.4 928.9 L807.1 927.6 L804.8 928.8 L802.5 928.2 L800.2 929.7 L797.9 927.2 L795.6 925.4 L793.3 924.2 L791.0 924.3 L787.9 902.3 L784.9 881.3 L782.6 880.4 L780.3 880.1 L778.0 879.6 L775.7 879.8 L772.6 881.2 L769.5 884.4 L767.1 885.6 L764.6 884.6 L762.2 886.3 L759.7 887.1 L757.2 888.2 L754.7 889.7 L752.1 890.4 L749.6 889.7 L747.3 887.2 L745.0 882.8 L742.4 886.7 L739.8 886.5 L737.3 890.5 L734.7 893.6 L732.2 896.0 L729.6 898.2 L727.0 899.3 L724.5 900.8 L721.9 901.3 L719.6 903.9 L717.3 903.8 L715.0 904.3 L712.7 905.9 L710.0 905.6 L707.3 904.3 L704.7 905.1 L702.0 905.9 L698.9 903.8 L695.8 901.3 L692.8 884.4 L690.4 883.6 L688.1 882.2 L685.8 881.5 L683.5 881.3 L680.5 879.9 L677.4 879.5 L675.0 879.1 L672.6 879.8 L670.2 879.6 L667.7 879.1 L665.3 879.1 L662.9 878.9 L660.5 879.0 L657.9 879.6 L655.4 879.8 L652.8 879.8 L649.8 881.1 L646.7 881.3 L644.4 888.0 L642.1 894.2 L639.8 899.5 L637.5 907.4 L634.4 914.7 L631.3 919.7 L628.8 917.3 L626.2 914.8 L623.7 913.5 L621.4 903.9 L619.1 896.7 L616.7 901.0 L614.4 902.2 L612.1 905.8 L609.8 910.5 L607.3 913.5 L604.7 918.5 L602.2 922.8 L599.5 919.3 L596.8 919.5 L594.1 916.6 L591.4 915.1 L588.9 913.9 L586.3 915.1 L583.7 913.5 L581.4 915.1 L579.1 914.0 L576.8 914.2 L574.5 913.5 L572.0 914.7 L569.4 919.2 L566.8 921.2 L564.2 924.2 L561.5 928.8 L558.8 931.5 L556.1 933.5 L553.0 928.0 L550.0 922.8 L546.9 889.0 L543.8 893.6 L541.5 877.8 L539.2 877.8 L536.9 877.8 L534.6 877.8 L532.3 877.8 L530.0 877.8 L527.5 877.8 L525.0 877.8 L522.5 877.9 L520.2 878.2 L517.9 878.4 L515.6 878.2 L513.3 878.6 L511.0 878.6 L508.7 879.0 L506.4 879.4 L504.1 879.3 L501.8 879.2 L499.5 879.8 L496.4 884.0 L493.3 885.9 L490.3 886.8 L487.2 889.0 L484.1 902.0 L481.1 913.5 L478.8 922.0 L476.5 928.1 L473.4 927.1 L470.3 925.8 L466.5 924.3 L462.6 901.3 L460.1 900.7 L457.5 898.9 L455.0 899.6 L452.4 899.1 L449.8 896.8 L447.3 896.7 L444.7 896.0 L442.2 895.9 L439.6 895.1 L437.0 894.0 L434.5 893.9 L431.9 893.6 L429.4 893.9 L426.8 892.1 L424.2 892.8 L421.2 904.3 L418.1 906.4 L415.0 911.2 L412.5 910.9 L409.9 913.4 L407.4 914.3 L404.7 897.8 L402.0 882.1 L399.7 887.4 L396.6 890.2 L393.5 892.0 L390.5 893.8 L387.4 895.1 L384.3 893.6 L380.5 899.0 L377.8 893.7 L375.1 890.5 L372.4 888.1 L369.7 883.6 L367.4 890.5 L364.9 892.5 L362.3 894.4 L359.8 898.2 L357.5 899.0 L355.2 901.4 L352.9 905.1 L350.5 905.9 L347.5 908.3 L344.4 913.5 L341.7 920.1 L339.0 923.5 L336.5 901.7 L334.0 880.5 L330.6 880.5 L328.3 884.2 L326.0 887.4 L322.9 888.1 L319.8 885.9 L317.2 885.7 L314.5 883.9 L311.8 883.1 L309.1 883.6 L306.4 884.2 L303.7 883.0 L301.0 882.0 L298.3 882.8 L295.3 883.1 L292.2 885.9 L289.6 887.7 L287.1 888.5 L284.5 892.0 L281.5 895.5 L278.4 899.0 L275.8 896.8 L273.3 897.0 L270.7 896.7 L268.1 897.0 L265.6 895.8 L263.0 897.4 L259.2 899.7 L256.9 904.4 L254.6 908.2 L251.9 910.5 L249.2 915.1 L246.6 916.8 L244.0 919.7Z"/>
<path clip-path="url(#co)" fill="none" stroke="#eedc86" stroke-width="1.25" stroke-linejoin="round" d="M244.0 816.7 C244.9 817.3 246.8 817.6 249.2 820.5 C251.6 823.4 255.4 830.9 258.4 834.3 C261.5 837.8 264.3 840.5 267.6 841.2 C271.0 841.2 275.3 838.9 278.4 838.9 C281.5 839.7 284.0 844.3 286.1 845.8 C288.1 847.4 289.1 846.5 290.7 848.1 C292.2 849.8 293.7 853.6 295.3 855.8 C296.8 858.0 298.1 860.3 299.9 861.2 C301.7 861.2 303.5 861.2 306.0 861.2 C308.6 860.2 313.2 856.1 315.2 855.0 C317.3 855.0 316.9 855.0 318.3 855.0 C319.7 856.7 321.6 863.9 323.7 865.0 C325.7 865.0 328.4 865.0 330.6 862.0 C332.8 857.9 334.4 844.9 336.7 840.5 C339.0 836.0 341.3 835.1 344.4 835.1 C347.5 835.3 352.1 839.8 355.2 842.0 C358.2 844.2 360.5 845.8 362.8 848.1 C365.1 850.4 367.2 853.0 369.0 855.8 C370.8 858.6 372.3 865.0 373.6 865.0 C374.9 865.0 375.8 856.6 376.6 855.8 C377.5 855.8 377.2 860.4 379.0 860.4 C380.7 860.4 384.7 855.8 387.4 855.8 C390.1 855.8 392.6 859.1 395.1 860.4 C397.5 861.7 400.2 863.5 402.0 863.5 C403.8 859.8 403.4 842.0 405.8 838.2 C408.3 838.2 413.2 838.2 416.6 840.5 C419.9 842.9 423.0 851.2 425.8 852.7 C428.6 852.7 427.3 850.2 433.5 849.7 C439.6 849.7 457.0 849.7 462.6 849.7 C468.3 844.0 465.6 822.9 467.2 815.9 C468.9 808.9 470.3 807.7 472.6 807.4 C474.9 807.4 478.9 810.9 481.1 814.4 C483.2 817.8 483.6 823.1 485.7 828.2 C487.7 833.3 491.3 841.2 493.3 845.1 C495.4 848.9 495.4 851.2 497.9 851.2 C500.5 850.7 506.1 842.5 508.7 842.0 C511.3 842.0 511.5 843.8 513.3 848.1 C515.1 852.5 517.6 863.4 519.4 868.1 C521.2 872.8 522.0 875.0 524.0 876.4 C526.1 876.4 530.1 876.4 531.7 876.4 C533.4 876.0 532.8 875.5 533.8 874.2 C534.8 873.0 536.4 874.2 537.7 868.9 C539.0 856.1 540.4 809.2 541.5 797.5 C542.7 797.5 543.8 797.5 544.6 798.2 C545.4 800.3 544.7 808.1 546.1 809.7 C547.5 809.7 550.6 808.2 553.0 808.2 C555.5 808.3 557.9 809.0 560.7 810.5 C563.5 812.1 567.4 816.5 569.9 817.4 C572.5 817.4 573.8 816.1 576.1 815.9 C578.4 815.9 580.7 815.9 583.7 815.9 C586.8 815.6 591.7 814.4 594.5 814.4 C597.3 814.7 599.1 816.7 600.6 818.2 C602.2 819.7 602.5 818.2 603.7 823.6 C604.9 830.6 606.0 859.9 607.5 860.4 C609.1 860.4 610.7 832.7 612.9 826.6 C615.1 824.3 617.8 824.3 620.6 824.3 C623.4 824.8 627.0 827.0 629.8 829.7 C632.6 832.4 635.2 836.6 637.5 840.5 C639.8 844.3 642.0 848.6 643.6 852.7 C645.3 856.8 646.3 865.0 647.5 865.0 C648.6 865.0 649.6 854.5 650.5 852.7 C651.4 852.7 651.9 852.7 652.8 854.3 C653.7 857.6 654.4 870.0 655.9 872.7 C657.4 872.7 660.0 870.4 662.0 870.4 C664.1 871.0 665.6 875.4 668.2 876.4 C670.7 876.4 675.5 876.4 677.4 876.4 C679.3 872.2 678.9 854.9 679.7 851.2 C680.5 851.2 681.2 852.2 682.0 854.3 C682.8 856.3 683.5 863.5 684.3 863.5 C685.1 859.7 685.2 837.1 686.6 831.2 C688.0 828.2 690.2 828.9 692.8 828.2 C695.3 827.4 698.4 826.6 702.0 826.6 C705.5 826.9 710.2 828.4 714.2 829.7 C718.3 831.0 723.2 832.3 726.5 834.3 C729.9 836.4 732.5 839.6 734.2 842.0 C735.9 844.4 735.0 847.1 736.5 848.9 C738.0 850.7 741.5 852.7 743.4 852.7 C745.3 851.1 746.5 841.5 748.0 838.9 C749.6 837.4 750.1 837.4 752.6 837.4 C755.2 838.7 760.1 845.3 763.4 846.6 C766.7 846.6 770.3 845.1 772.6 845.1 C774.9 845.6 775.4 849.7 777.2 849.7 C779.0 844.3 781.0 818.7 783.3 812.8 C785.6 812.8 789.0 814.4 791.0 814.4 C793.1 812.9 793.3 805.7 795.6 804.4 C797.9 804.4 802.3 804.8 804.8 806.7 C807.4 808.6 808.9 810.8 811.0 815.9 C813.0 821.0 815.6 833.4 817.1 837.4 C818.6 839.7 818.0 838.9 820.0 839.7 C822.0 840.5 824.1 841.6 829.2 842.0 C834.3 842.0 845.6 842.0 850.7 842.0 C855.8 842.9 857.1 845.2 859.9 847.4 C862.7 849.5 865.5 853.6 867.6 855.0 C869.6 855.8 871.1 855.8 872.2 855.8 C873.4 855.3 873.7 852.0 874.5 852.0 C875.3 852.4 875.8 854.3 876.8 858.1 C877.8 862.0 879.5 874.9 880.6 875.0 C881.8 875.0 882.8 864.8 883.7 858.9 C884.6 853.0 884.9 842.2 886.0 839.7 C887.2 839.7 889.3 842.9 890.6 843.5 C891.9 843.5 892.2 843.5 893.7 843.5 C895.2 841.2 896.8 831.4 899.8 829.7 C902.9 829.7 908.8 832.9 912.1 833.5 C915.5 833.5 917.0 833.5 919.8 833.5 C922.6 833.4 926.7 832.8 929.0 832.8 C931.3 834.7 932.1 841.2 933.6 845.1 C935.2 848.9 936.2 852.0 938.2 855.8 C940.3 859.7 943.1 865.0 945.9 868.1 C948.7 871.2 951.5 872.9 955.1 874.2 C958.7 875.6 964.1 876.0 967.4 876.4 C970.7 876.4 972.9 876.4 975.1 876.4 C977.2 875.9 978.1 873.8 980.4 873.5 C982.8 873.5 984.9 874.2 988.9 874.2 C992.9 874.2 999.1 874.0 1004.2 873.9 C1009.4 873.9 1013.5 873.9 1019.6 873.9 C1025.7 873.9 1036.5 873.9 1041.1 873.9 C1045.7 874.1 1043.1 874.6 1047.2 875.0 C1051.3 875.4 1061.6 876.1 1065.7 876.1 C1069.8 871.0 1070.3 849.0 1071.8 844.3 C1073.3 844.3 1073.6 848.1 1074.9 848.1 C1076.2 847.2 1077.9 838.9 1079.5 838.9 C1081.0 840.5 1082.6 852.7 1084.1 857.3 C1085.6 862.0 1087.4 864.5 1088.7 866.6 C1090.0 868.6 1090.7 869.6 1091.8 869.6 C1092.8 867.3 1093.6 859.9 1094.8 852.7 C1096.1 845.6 1097.6 831.0 1099.4 826.6 C1101.2 826.6 1103.9 826.6 1105.6 826.6 C1107.2 824.6 1108.1 814.4 1109.4 814.4 C1110.7 814.6 1112.5 825.7 1113.3 828.2 C1114.0 828.9 1112.5 828.8 1113.8 828.9 C1115.2 828.9 1119.6 828.9 1121.5 828.9 C1123.4 830.1 1123.6 832.7 1125.4 835.9 C1127.1 839.1 1130.3 847.5 1132.3 848.1 C1134.2 848.1 1135.0 839.9 1136.9 839.7 C1138.8 839.7 1141.9 843.7 1143.8 846.6 C1145.7 849.5 1145.1 856.1 1148.4 857.3 C1151.7 857.3 1159.9 856.7 1163.7 854.3 C1167.6 851.8 1169.1 843.5 1171.4 842.8 C1173.7 842.8 1175.8 846.0 1177.6 849.7 C1179.3 853.4 1180.6 864.8 1182.2 865.0 C1183.7 865.0 1185.2 852.6 1186.8 851.2 C1188.3 851.2 1188.9 856.6 1191.4 856.6 C1193.8 854.5 1198.5 838.9 1201.4 838.9 C1204.2 841.5 1206.6 871.9 1208.3 871.9 C1209.9 869.9 1210.1 835.5 1211.3 826.6 C1212.6 819.0 1213.9 819.9 1215.9 819.0 C1218.0 819.0 1220.8 819.2 1223.6 821.3 C1226.4 823.3 1230.0 828.9 1232.8 831.2 C1235.6 833.5 1237.9 835.0 1240.5 835.1 C1243.1 835.1 1245.9 832.1 1248.2 832.0 C1250.5 832.0 1251.5 832.0 1254.3 834.3 C1257.1 837.0 1262.0 845.1 1265.1 848.1 C1268.1 851.2 1270.4 849.7 1272.8 852.7 C1275.1 855.8 1277.1 865.7 1278.9 866.6 C1280.7 866.6 1281.7 859.3 1283.5 858.1 C1285.3 858.1 1287.6 858.8 1289.6 859.7 C1291.7 860.5 1293.5 863.4 1295.8 863.5 C1298.1 863.5 1301.2 862.1 1303.5 860.4 C1305.8 858.8 1307.8 853.5 1309.6 853.5 C1311.4 854.4 1312.4 865.8 1314.2 865.8 C1316.0 859.9 1317.5 825.4 1320.3 818.2 C1323.2 818.2 1328.3 820.9 1331.1 822.8 C1333.9 824.7 1334.4 827.5 1337.2 829.7 C1340.1 831.9 1344.9 834.8 1348.0 835.9 C1351.1 835.9 1353.1 835.9 1355.7 835.9 C1358.2 837.8 1360.5 845.4 1363.3 847.4 C1366.2 847.4 1369.0 847.4 1372.6 847.4 C1376.1 850.1 1381.3 859.8 1384.8 863.5 C1388.4 867.2 1391.5 868.5 1394.0 869.6 C1396.6 870.4 1397.7 869.9 1400.0 870.4 C1402.3 870.9 1403.8 872.3 1407.7 872.7 C1411.5 872.7 1416.6 872.7 1423.0 872.7 C1429.4 873.0 1438.4 873.6 1446.1 874.2 C1453.7 874.9 1459.4 876.0 1469.1 876.4 C1478.8 876.4 1497.8 876.4 1504.4 876.4 C1511.1 875.8 1507.5 873.2 1509.0 872.7 C1510.5 872.7 1511.1 873.5 1513.6 873.5 C1516.2 873.5 1519.0 872.7 1524.4 872.7 C1529.7 872.8 1541.0 873.8 1545.9 873.9 C1550.7 873.9 1549.7 873.5 1553.5 873.5 C1557.4 873.7 1564.8 875.2 1568.9 875.5 C1573.0 875.5 1575.9 875.5 1578.1 875.0 C1580.3 872.2 1580.9 861.1 1581.9 858.9 C1583.0 858.9 1583.5 859.7 1584.2 862.0 C1585.0 864.3 1585.9 872.7 1586.5 872.7 C1587.2 871.7 1587.1 861.3 1588.1 855.8 C1589.1 850.3 1591.3 840.3 1592.7 839.7 C1594.1 839.7 1595.4 848.5 1596.5 852.0 C1597.7 855.4 1598.4 859.0 1599.6 860.4 C1600.8 860.4 1601.9 860.4 1603.4 860.4 C1605.0 862.5 1606.9 870.1 1608.8 872.7 C1610.7 875.3 1613.2 875.6 1615.0 875.8 C1616.7 875.8 1618.0 875.8 1619.6 873.5 C1621.1 870.7 1622.8 865.3 1624.2 858.9 C1625.6 852.5 1626.5 838.9 1628.0 835.1 C1629.5 835.1 1632.1 835.1 1633.4 835.9 C1634.7 839.8 1634.7 856.6 1635.7 858.9 C1636.7 858.9 1636.8 851.8 1639.5 849.7 C1642.2 847.5 1648.7 849.7 1651.8 845.8 C1654.9 837.6 1656.4 807.3 1657.9 800.5 C1659.5 800.5 1658.5 805.1 1661.0 805.1 C1663.6 805.1 1670.1 800.7 1673.3 800.5 C1676.5 800.5 1678.7 803.4 1680.0 804.2 C1681.3 805.0 1680.4 804.2 1681.0 805.1 C1681.6 807.3 1683.1 815.0 1683.6 817.0 C1684.1 817.4 1683.0 817.0 1684.0 817.4 C1685.1 818.4 1688.7 822.0 1690.0 822.8 C1691.3 822.8 1691.0 822.2 1691.7 822.0 C1692.4 822.0 1692.7 822.0 1694.3 822.0 C1695.9 824.5 1699.5 832.6 1701.4 837.0 C1703.3 841.4 1703.8 846.7 1705.7 848.4 C1707.6 848.4 1710.7 848.4 1712.8 847.7 C1715.0 845.6 1716.6 840.1 1718.5 835.6 C1720.4 831.1 1722.1 821.8 1724.3 820.6 C1726.4 820.6 1729.6 824.5 1731.4 828.5 C1733.2 832.4 1733.5 837.4 1735.0 844.2 C1736.4 850.9 1737.7 864.4 1740.0 869.1 C1742.2 872.7 1745.4 872.2 1748.5 872.7 C1751.6 872.7 1756.4 872.7 1758.5 872.0 C1760.7 870.3 1760.2 872.0 1761.4 862.7 C1762.6 853.4 1763.7 825.3 1765.7 816.3 C1767.6 809.2 1770.9 810.3 1772.8 809.2 C1774.7 809.2 1775.2 809.2 1777.1 809.9 C1779.0 812.6 1781.4 822.6 1784.2 825.6 C1787.1 827.7 1791.8 827.5 1794.2 827.7 C1796.6 827.7 1796.6 827.0 1798.5 827.0 C1800.4 828.6 1803.2 834.6 1805.6 837.0 C1808.0 839.4 1810.4 839.6 1812.8 841.3 C1815.1 843.0 1817.3 845.7 1819.9 847.0 C1822.5 848.3 1826.1 847.0 1828.5 849.2 C1830.8 853.3 1832.3 867.5 1834.2 872.0 C1836.1 876.3 1837.9 875.6 1839.9 876.3 C1841.9 876.3 1844.6 876.3 1846.3 876.3 C1848.0 874.9 1848.6 874.4 1849.9 867.7 C1851.2 861.1 1853.0 840.7 1854.2 836.3 C1855.4 836.3 1855.6 837.3 1857.0 841.3 C1858.4 845.4 1861.3 856.3 1862.7 860.6 C1864.2 864.9 1864.6 867.0 1865.6 867.0 C1866.5 862.4 1867.0 839.3 1868.4 832.7 C1869.8 827.7 1873.1 828.6 1874.0 827.7"/>
<path clip-path="url(#co)" fill="none" stroke="#eedc86" stroke-width="1.25" stroke-linejoin="round" d="M244.0 937.3 C244.9 936.7 246.8 936.4 249.2 933.5 C251.6 930.6 255.4 923.1 258.4 919.7 C261.5 916.2 264.3 913.5 267.6 912.8 C271.0 912.8 275.3 915.1 278.4 915.1 C281.5 914.3 284.0 909.7 286.1 908.2 C288.1 906.6 289.1 907.5 290.7 905.9 C292.2 904.2 293.7 900.4 295.3 898.2 C296.8 896.0 298.1 893.7 299.9 892.8 C301.7 892.8 303.5 892.8 306.0 892.8 C308.6 893.8 313.2 897.9 315.2 899.0 C317.3 899.0 316.9 899.0 318.3 899.0 C319.7 897.3 321.6 890.1 323.7 889.0 C325.7 889.0 328.4 889.0 330.6 892.0 C332.8 896.1 334.4 909.1 336.7 913.5 C339.0 918.0 341.3 918.9 344.4 918.9 C347.5 918.7 352.1 914.2 355.2 912.0 C358.2 909.8 360.5 908.2 362.8 905.9 C365.1 903.6 367.2 901.0 369.0 898.2 C370.8 895.4 372.3 889.0 373.6 889.0 C374.9 889.0 375.8 897.4 376.6 898.2 C377.5 898.2 377.2 893.6 379.0 893.6 C380.7 893.6 384.7 898.2 387.4 898.2 C390.1 898.2 392.6 894.9 395.1 893.6 C397.5 892.3 400.2 890.5 402.0 890.5 C403.8 894.2 403.4 912.0 405.8 915.8 C408.3 915.8 413.2 915.8 416.6 913.5 C419.9 911.1 423.0 902.8 425.8 901.3 C428.6 901.3 427.3 903.8 433.5 904.3 C439.6 904.3 457.0 904.3 462.6 904.3 C468.3 910.0 465.6 931.1 467.2 938.1 C468.9 945.1 470.3 946.3 472.6 946.6 C474.9 946.6 478.9 943.1 481.1 939.6 C483.2 936.2 483.6 930.9 485.7 925.8 C487.7 920.7 491.3 912.8 493.3 908.9 C495.4 905.1 495.4 902.8 497.9 902.8 C500.5 903.3 506.1 911.5 508.7 912.0 C511.3 912.0 511.5 910.2 513.3 905.9 C515.1 901.5 517.6 890.6 519.4 885.9 C521.2 881.2 522.0 879.0 524.0 877.6 C526.1 877.6 530.1 877.6 531.7 877.6 C533.4 878.0 532.8 878.5 533.8 879.8 C534.8 881.0 536.4 879.8 537.7 885.1 C539.0 897.9 540.4 944.8 541.5 956.5 C542.7 956.5 543.8 956.5 544.6 955.8 C545.4 953.7 544.7 945.9 546.1 944.3 C547.5 944.3 550.6 945.8 553.0 945.8 C555.5 945.7 557.9 945.0 560.7 943.5 C563.5 941.9 567.4 937.5 569.9 936.6 C572.5 936.6 573.8 937.9 576.1 938.1 C578.4 938.1 580.7 938.1 583.7 938.1 C586.8 938.4 591.7 939.6 594.5 939.6 C597.3 939.3 599.1 937.3 600.6 935.8 C602.2 934.3 602.5 935.8 603.7 930.4 C604.9 923.4 606.0 894.1 607.5 893.6 C609.1 893.6 610.7 921.3 612.9 927.4 C615.1 929.7 617.8 929.7 620.6 929.7 C623.4 929.2 627.0 927.0 629.8 924.3 C632.6 921.6 635.2 917.4 637.5 913.5 C639.8 909.7 642.0 905.4 643.6 901.3 C645.3 897.2 646.3 889.0 647.5 889.0 C648.6 889.0 649.6 899.5 650.5 901.3 C651.4 901.3 651.9 901.3 652.8 899.7 C653.7 896.4 654.4 884.0 655.9 881.3 C657.4 881.3 660.0 883.6 662.0 883.6 C664.1 883.0 665.6 878.6 668.2 877.6 C670.7 877.6 675.5 877.6 677.4 877.6 C679.3 881.8 678.9 899.1 679.7 902.8 C680.5 902.8 681.2 901.8 682.0 899.7 C682.8 897.7 683.5 890.5 684.3 890.5 C685.1 894.3 685.2 916.9 686.6 922.8 C688.0 925.8 690.2 925.1 692.8 925.8 C695.3 926.6 698.4 927.4 702.0 927.4 C705.5 927.1 710.2 925.6 714.2 924.3 C718.3 923.0 723.2 921.7 726.5 919.7 C729.9 917.6 732.5 914.4 734.2 912.0 C735.9 909.6 735.0 906.9 736.5 905.1 C738.0 903.3 741.5 901.3 743.4 901.3 C745.3 902.9 746.5 912.5 748.0 915.1 C749.6 916.6 750.1 916.6 752.6 916.6 C755.2 915.3 760.1 908.7 763.4 907.4 C766.7 907.4 770.3 908.9 772.6 908.9 C774.9 908.4 775.4 904.3 777.2 904.3 C779.0 909.7 781.0 935.3 783.3 941.2 C785.6 941.2 789.0 939.6 791.0 939.6 C793.1 941.1 793.3 948.3 795.6 949.6 C797.9 949.6 802.3 949.2 804.8 947.3 C807.4 945.4 808.9 943.2 811.0 938.1 C813.0 933.0 815.6 920.6 817.1 916.6 C818.6 914.3 818.0 915.1 820.0 914.3 C822.0 913.5 824.1 912.4 829.2 912.0 C834.3 912.0 845.6 912.0 850.7 912.0 C855.8 911.1 857.1 908.8 859.9 906.6 C862.7 904.5 865.5 900.4 867.6 899.0 C869.6 898.2 871.1 898.2 872.2 898.2 C873.4 898.7 873.7 902.0 874.5 902.0 C875.3 901.6 875.8 899.7 876.8 895.9 C877.8 892.0 879.5 879.1 880.6 879.0 C881.8 879.0 882.8 889.2 883.7 895.1 C884.6 901.0 884.9 911.8 886.0 914.3 C887.2 914.3 889.3 911.1 890.6 910.5 C891.9 910.5 892.2 910.5 893.7 910.5 C895.2 912.8 896.8 922.6 899.8 924.3 C902.9 924.3 908.8 921.1 912.1 920.5 C915.5 920.5 917.0 920.5 919.8 920.5 C922.6 920.6 926.7 921.2 929.0 921.2 C931.3 919.3 932.1 912.8 933.6 908.9 C935.2 905.1 936.2 902.0 938.2 898.2 C940.3 894.3 943.1 889.0 945.9 885.9 C948.7 882.8 951.5 881.1 955.1 879.8 C958.7 878.4 964.1 878.0 967.4 877.6 C970.7 877.6 972.9 877.6 975.1 877.6 C977.2 878.1 978.1 880.2 980.4 880.5 C982.8 880.5 984.9 879.8 988.9 879.8 C992.9 879.8 999.1 880.0 1004.2 880.1 C1009.4 880.1 1013.5 880.1 1019.6 880.1 C1025.7 880.1 1036.5 880.1 1041.1 880.1 C1045.7 879.9 1043.1 879.4 1047.2 879.0 C1051.3 878.6 1061.6 877.9 1065.7 877.9 C1069.8 883.0 1070.3 905.0 1071.8 909.7 C1073.3 909.7 1073.6 905.9 1074.9 905.9 C1076.2 906.8 1077.9 915.1 1079.5 915.1 C1081.0 913.5 1082.6 901.3 1084.1 896.7 C1085.6 892.0 1087.4 889.5 1088.7 887.4 C1090.0 885.4 1090.7 884.4 1091.8 884.4 C1092.8 886.7 1093.6 894.1 1094.8 901.3 C1096.1 908.4 1097.6 923.0 1099.4 927.4 C1101.2 927.4 1103.9 927.4 1105.6 927.4 C1107.2 929.4 1108.1 939.6 1109.4 939.6 C1110.7 939.4 1112.5 928.3 1113.3 925.8 C1114.0 925.1 1112.5 925.2 1113.8 925.1 C1115.2 925.1 1119.6 925.1 1121.5 925.1 C1123.4 923.9 1123.6 921.3 1125.4 918.1 C1127.1 914.9 1130.3 906.5 1132.3 905.9 C1134.2 905.9 1135.0 914.1 1136.9 914.3 C1138.8 914.3 1141.9 910.3 1143.8 907.4 C1145.7 904.5 1145.1 897.9 1148.4 896.7 C1151.7 896.7 1159.9 897.3 1163.7 899.7 C1167.6 902.2 1169.1 910.5 1171.4 911.2 C1173.7 911.2 1175.8 908.0 1177.6 904.3 C1179.3 900.6 1180.6 889.2 1182.2 889.0 C1183.7 889.0 1185.2 901.4 1186.8 902.8 C1188.3 902.8 1188.9 897.4 1191.4 897.4 C1193.8 899.5 1198.5 915.1 1201.4 915.1 C1204.2 912.5 1206.6 882.1 1208.3 882.1 C1209.9 884.1 1210.1 918.5 1211.3 927.4 C1212.6 935.0 1213.9 934.1 1215.9 935.0 C1218.0 935.0 1220.8 934.8 1223.6 932.7 C1226.4 930.7 1230.0 925.1 1232.8 922.8 C1235.6 920.5 1237.9 919.0 1240.5 918.9 C1243.1 918.9 1245.9 921.9 1248.2 922.0 C1250.5 922.0 1251.5 922.0 1254.3 919.7 C1257.1 917.0 1262.0 908.9 1265.1 905.9 C1268.1 902.8 1270.4 904.3 1272.8 901.3 C1275.1 898.2 1277.1 888.3 1278.9 887.4 C1280.7 887.4 1281.7 894.7 1283.5 895.9 C1285.3 895.9 1287.6 895.2 1289.6 894.3 C1291.7 893.5 1293.5 890.6 1295.8 890.5 C1298.1 890.5 1301.2 891.9 1303.5 893.6 C1305.8 895.2 1307.8 900.5 1309.6 900.5 C1311.4 899.6 1312.4 888.2 1314.2 888.2 C1316.0 894.1 1317.5 928.6 1320.3 935.8 C1323.2 935.8 1328.3 933.1 1331.1 931.2 C1333.9 929.3 1334.4 926.5 1337.2 924.3 C1340.1 922.1 1344.9 919.2 1348.0 918.1 C1351.1 918.1 1353.1 918.1 1355.7 918.1 C1358.2 916.2 1360.5 908.6 1363.3 906.6 C1366.2 906.6 1369.0 906.6 1372.6 906.6 C1376.1 903.9 1381.3 894.2 1384.8 890.5 C1388.4 886.8 1391.5 885.5 1394.0 884.4 C1396.6 883.6 1397.7 884.1 1400.0 883.6 C1402.3 883.1 1403.8 881.7 1407.7 881.3 C1411.5 881.3 1416.6 881.3 1423.0 881.3 C1429.4 881.0 1438.4 880.4 1446.1 879.8 C1453.7 879.1 1459.4 878.0 1469.1 877.6 C1478.8 877.6 1497.8 877.6 1504.4 877.6 C1511.1 878.2 1507.5 880.8 1509.0 881.3 C1510.5 881.3 1511.1 880.5 1513.6 880.5 C1516.2 880.5 1519.0 881.3 1524.4 881.3 C1529.7 881.2 1541.0 880.2 1545.9 880.1 C1550.7 880.1 1549.7 880.5 1553.5 880.5 C1557.4 880.3 1564.8 878.8 1568.9 878.5 C1573.0 878.5 1575.9 878.5 1578.1 879.0 C1580.3 881.8 1580.9 892.9 1581.9 895.1 C1583.0 895.1 1583.5 894.3 1584.2 892.0 C1585.0 889.7 1585.9 881.3 1586.5 881.3 C1587.2 882.3 1587.1 892.7 1588.1 898.2 C1589.1 903.7 1591.3 913.7 1592.7 914.3 C1594.1 914.3 1595.4 905.5 1596.5 902.0 C1597.7 898.6 1598.4 895.0 1599.6 893.6 C1600.8 893.6 1601.9 893.6 1603.4 893.6 C1605.0 891.5 1606.9 883.9 1608.8 881.3 C1610.7 878.7 1613.2 878.4 1615.0 878.2 C1616.7 878.2 1618.0 878.2 1619.6 880.5 C1621.1 883.3 1622.8 888.7 1624.2 895.1 C1625.6 901.5 1626.5 915.1 1628.0 918.9 C1629.5 918.9 1632.1 918.9 1633.4 918.1 C1634.7 914.2 1634.7 897.4 1635.7 895.1 C1636.7 895.1 1636.8 902.2 1639.5 904.3 C1642.2 906.5 1648.7 904.3 1651.8 908.2 C1654.9 916.4 1656.4 946.7 1657.9 953.5 C1659.5 953.5 1658.5 948.9 1661.0 948.9 C1663.6 948.9 1670.1 953.3 1673.3 953.5 C1676.5 953.5 1678.7 950.6 1680.0 949.8 C1681.3 949.0 1680.4 949.8 1681.0 948.9 C1681.6 946.7 1683.1 939.0 1683.6 937.0 C1684.1 936.6 1683.0 937.0 1684.0 936.6 C1685.1 935.6 1688.7 932.0 1690.0 931.2 C1691.3 931.2 1691.0 931.8 1691.7 932.0 C1692.4 932.0 1692.7 932.0 1694.3 932.0 C1695.9 929.5 1699.5 921.4 1701.4 917.0 C1703.3 912.6 1703.8 907.3 1705.7 905.6 C1707.6 905.6 1710.7 905.6 1712.8 906.3 C1715.0 908.4 1716.6 913.9 1718.5 918.4 C1720.4 922.9 1722.1 932.2 1724.3 933.4 C1726.4 933.4 1729.6 929.5 1731.4 925.5 C1733.2 921.6 1733.5 916.6 1735.0 909.8 C1736.4 903.1 1737.7 889.6 1740.0 884.9 C1742.2 881.3 1745.4 881.8 1748.5 881.3 C1751.6 881.3 1756.4 881.3 1758.5 882.0 C1760.7 883.7 1760.2 882.0 1761.4 891.3 C1762.6 900.6 1763.7 928.7 1765.7 937.7 C1767.6 944.8 1770.9 943.7 1772.8 944.8 C1774.7 944.8 1775.2 944.8 1777.1 944.1 C1779.0 941.4 1781.4 931.4 1784.2 928.4 C1787.1 926.3 1791.8 926.5 1794.2 926.3 C1796.6 926.3 1796.6 927.0 1798.5 927.0 C1800.4 925.4 1803.2 919.4 1805.6 917.0 C1808.0 914.6 1810.4 914.4 1812.8 912.7 C1815.1 911.0 1817.3 908.3 1819.9 907.0 C1822.5 905.7 1826.1 907.0 1828.5 904.8 C1830.8 900.7 1832.3 886.5 1834.2 882.0 C1836.1 877.7 1837.9 878.4 1839.9 877.7 C1841.9 877.7 1844.6 877.7 1846.3 877.7 C1848.0 879.1 1848.6 879.6 1849.9 886.3 C1851.2 892.9 1853.0 913.3 1854.2 917.7 C1855.4 917.7 1855.6 916.7 1857.0 912.7 C1858.4 908.6 1861.3 897.7 1862.7 893.4 C1864.2 889.1 1864.6 887.0 1865.6 887.0 C1866.5 891.6 1867.0 914.7 1868.4 921.3 C1869.8 926.3 1873.1 925.4 1874.0 926.3"/>
</svg>

<svg class="abs" style="left:0;top:0" width="1954" height="1226" viewBox="0 0 1954 1226">
<!-- track overlays -->
<path d="M1826 150H1874V198H1835A9 9 0 0 1 1826 189Z" fill="#22212b"/>
<path d="M1826 447H1874V495H1835A9 9 0 0 1 1826 486Z" fill="#22212b"/>
<path d="M1826 745H1874V793H1835A9 9 0 0 1 1826 784Z" fill="#22212b"/>
<g transform="translate(0 0)" fill="none" stroke="#7c7b84" stroke-linecap="round" stroke-linejoin="round">
<polyline stroke-width="3.5" points="1836,173.2 1839.6,162 1839.6,184.8 1844.6,165.2 1844.9,181.6 1850.1,167.6 1850.1,179.6 1853.9,173"/>
<path stroke-width="2.1" d="M1860 163v7M1856.6 166.4l3.4-3.6 3.4 3.6M1860 177v7M1856.6 180.6l3.4 3.6 3.4-3.6"/>
</g>
<g transform="translate(0 296)" fill="none" stroke="#7c7b84" stroke-linecap="round" stroke-linejoin="round">
<polyline stroke-width="3.5" points="1836,173.2 1839.6,162 1839.6,184.8 1844.6,165.2 1844.9,181.6 1850.1,167.6 1850.1,179.6 1853.9,173"/>
<path stroke-width="2.1" d="M1860 163v7M1856.6 166.4l3.4-3.6 3.4 3.6M1860 177v7M1856.6 180.6l3.4 3.6 3.4-3.6"/>
</g>
<g transform="translate(0 594)" fill="none" stroke="#7c7b84" stroke-linecap="round" stroke-linejoin="round">
<polyline stroke-width="3.5" points="1836,173.2 1839.6,162 1839.6,184.8 1844.6,165.2 1844.9,181.6 1850.1,167.6 1850.1,179.6 1853.9,173"/>
<path stroke-width="2.1" d="M1860 163v7M1856.6 166.4l3.4-3.6 3.4 3.6M1860 177v7M1856.6 180.6l3.4 3.6 3.4-3.6"/>
</g>
<!-- sidebar -->
<g fill="none" stroke="#7c7b84" stroke-linecap="round" stroke-linejoin="round">
<circle cx="1913.9" cy="144.3" r="17.9" stroke-width="4.9"/>
<polyline stroke-width="4.2" points="1919.2,133.4 1913.8,142.4 1923.3,147.8"/>
<path stroke-width="4.3" d="M1896.1 198.3Q1898.6 199.3 1899.2 204L1902.6 231Q1904.3 237.5 1906.2 231L1908.9 211Q1910.5 203.5 1912.6 211L1915.9 223Q1917.7 229 1919.6 223L1922.7 205Q1924.6 195.6 1926.6 205L1929.6 228Q1930.5 232.6 1932.3 234.3"/>
<path stroke-width="4.3" d="M1901.5 269.8V306.5M1913.9 269.8V306.5M1926.5 269.8V306.5"/>
</g>
<g fill="#7c7b84">
<circle cx="1901.5" cy="279.4" r="6.5"/><circle cx="1913.9" cy="294.4" r="6.5"/><circle cx="1926.5" cy="284.5" r="6.5"/>
</g>
<g fill="#22212b">
<circle cx="1901.5" cy="279.4" r="2.1"/><circle cx="1913.9" cy="294.4" r="2.1"/><circle cx="1926.5" cy="284.5" r="2.1"/>
</g>
</svg>

<div class="abs tick" style="left:326.4px;top:128px"></div>
<div class="abs tick" style="left:454.6px;top:128px"></div>
<div class="abs tick" style="left:582.9px;top:128px"></div>
<div class="abs tick" style="left:711.2px;top:128px"></div>
<div class="abs tick" style="left:839.4px;top:128px"></div>
<div class="abs tick" style="left:967.6px;top:128px"></div>
<div class="abs tick" style="left:1095.9px;top:128px"></div>
<div class="abs tick" style="left:1224.2px;top:128px"></div>
<div class="abs tick" style="left:1352.4px;top:128px"></div>
<div class="abs tick" style="left:1480.6px;top:128px"></div>
<div class="abs tick" style="left:1608.9px;top:128px"></div>
<div class="abs tick" style="left:1737.2px;top:128px"></div>
<div class="abs tick" style="left:1865.4px;top:128px"></div>
<div class="abs ruler" style="left:340.5px;top:120px">1:03</div>
<div class="abs ruler" style="left:597.0px;top:120px">1:04</div>
<div class="abs ruler" style="left:853.5px;top:120px">1:05</div>
<div class="abs ruler" style="left:1110.0px;top:120px">1:06</div>
<div class="abs ruler" style="left:1366.5px;top:120px">1:07</div>
<div class="abs ruler" style="left:1623.0px;top:120px">1:08</div>
<!-- playheads -->
<div class="abs" style="left:1072px;top:150px;width:5px;height:265px;background:linear-gradient(90deg,rgba(170,170,176,0.35),#c8c8cc 30%,#fff 50%,#c8c8cc 70%,rgba(170,170,176,0.35))"></div>
<div class="abs" style="left:1085px;top:447px;width:5px;height:266px;background:linear-gradient(90deg,rgba(170,170,176,0.35),#c8c8cc 30%,#fff 50%,#c8c8cc 70%,rgba(170,170,176,0.35))"></div>

<div id="tb" class="abs"></div>
<div class="abs ib" style="left:24px;top:1014px"></div>
<div class="abs ib" style="left:72px;top:1014px"></div>
<div class="abs ib" style="left:120px;top:1014px"></div>
<div class="abs" style="left:246px;top:1014px;width:52px;height:40px;border-radius:7px;background:#47455a"></div>


<svg class="abs" style="left:0;top:0" width="1954" height="1226" viewBox="0 0 1954 1226">
<g transform="translate(0 0)" fill="none" stroke="#f5e187" stroke-linecap="round" stroke-linejoin="round">
<path stroke-width="4.6" d="M28.2 1028.2L33.8 1026.8L43.3 1021.1V1044.1L33.8 1038.6L28.2 1037.3Z M34 1027V1038.5"/><path stroke-width="3.9" d="M50.4 1024.2A8.2 8.2 0 0 1 50.4 1037.8M54.8 1020.4A15.6 15.6 0 0 1 54.8 1041.6"/></g>
<g transform="translate(48 0)" fill="none" stroke="#f2f2f4" stroke-linecap="round" stroke-linejoin="round">
<path stroke-width="4.6" d="M28.2 1028.2L33.8 1026.8L43.3 1021.1V1044.1L33.8 1038.6L28.2 1037.3Z M34 1027V1038.5"/><path stroke-width="4.5" d="M98.2 1027.8L107.6 1037.6M107.6 1027.8L98.2 1037.6" transform="translate(-48 0)"/></g>
<g transform="translate(96 0)" fill="none" stroke="#7a68f5" stroke-linecap="round" stroke-linejoin="round">
<path stroke-width="4.6" d="M28.2 1028.2L33.8 1026.8L43.3 1021.1V1044.1L33.8 1038.6L28.2 1037.3Z M34 1027V1038.5"/><path stroke-width="3.9" d="M50.4 1024.2A8.2 8.2 0 0 1 50.4 1037.8M54.8 1020.4A15.6 15.6 0 0 1 54.8 1041.6"/></g>
<g stroke="#f2f2f4" stroke-linecap="round" stroke-linejoin="round"><path fill="none" stroke-width="3.3" d="M264.8 1020.6V1046.6M268.9 1023.2V1044.6M272.8 1025.8V1042.6M276.6 1030.6V1038.6"/><path fill="#f2f2f4" stroke-width="2.2" d="M259 1034.5L262.5 1030.8L280.5 1032.6L285.3 1034.5L280.5 1036.4L262.5 1038.2Z"/></g>
<path fill="none" stroke="#7c7b84" stroke-width="3.8" stroke-linecap="round" stroke-linejoin="round" d="M315.3 1020.8Q317 1022 317.6 1026L320.3 1044Q321.5 1049 322.7 1044L324.2 1030Q324.8 1025.5 326.2 1030L329.3 1038Q330.2 1042.3 331.2 1038L334.6 1024Q335.6 1018.5 336.8 1024L339.6 1043Q340.2 1046 341 1046.2"/>
<path fill="#7c7b84" d="M369.7 1045.8V1028Q371.5 1025.5 373.2 1033Q375 1042 376.6 1037Q378.5 1025.5 380.7 1027Q382.5 1028 384.5 1036Q386.2 1041 388.2 1032Q390.5 1020 392.3 1021Q394 1022 395.3 1032L397.8 1045.8Z"/>
</svg>

<div id="ov" class="abs"></div>
<div class="abs" style="left:20px;top:1140px;width:1756px;height:2px;background:#5a5867"></div>
<div class="abs" style="left:1776px;top:1078px;width:2px;height:128px;background:#5a5867"></div>

<svg class="abs" style="left:0;top:0" width="1954" height="1226" viewBox="0 0 1954 1226">
<defs><linearGradient id="gA"><stop offset="0" stop-color="#2c2b33"/><stop offset="1" stop-color="#707072"/></linearGradient>
<linearGradient id="gB"><stop offset="0" stop-color="#2a2930"/><stop offset="1" stop-color="#505056"/></linearGradient>
<linearGradient id="gC"><stop offset="0" stop-color="#404046"/><stop offset="1" stop-color="#707072"/></linearGradient>
<linearGradient id="gD"><stop offset="0" stop-color="#d0d0d2"/><stop offset="0.3" stop-color="#f0f0f0"/><stop offset="0.5" stop-color="#909092"/><stop offset="1" stop-color="#8a8a8c"/></linearGradient>
<linearGradient id="gE"><stop offset="0" stop-color="#707072"/><stop offset="1" stop-color="#9a9a9c"/></linearGradient>
<clipPath id="cov"><rect x="20" y="1078" width="1756" height="128"/></clipPath></defs>
<rect x="275.7" y="1002" width="9.3" height="8" fill="#2a2830"/>
<rect x="313.0" y="1002" width="2.5" height="8" fill="#3c3b44"/>
<rect x="331.0" y="1002" width="2.0" height="8" fill="#3c3b44"/>
<rect x="349.0" y="1002" width="2.0" height="8" fill="#22212a"/>
<rect x="462.0" y="1002" width="21.0" height="8" fill="url(#gA)"/>
<rect x="484.0" y="1002" width="23.5" height="8" fill="#b0b0b2"/>
<rect x="545.0" y="1002" width="6.6" height="8" fill="#808082"/>
<rect x="571.5" y="1002" width="6.5" height="8" fill="#808082"/>
<rect x="611.0" y="1002" width="7.0" height="8" fill="#3a3940"/>
<rect x="626.0" y="1002" width="23.0" height="8" fill="url(#gB)"/>
<rect x="692.0" y="1002" width="3.0" height="8" fill="#1f1e27"/>
<rect x="741.0" y="1002" width="5.5" height="8" fill="#35343c"/>
<rect x="753.0" y="1002" width="6.0" height="8" fill="#3a3940"/>
<rect x="771.0" y="1002" width="6.0" height="8" fill="#909092"/>
<rect x="784.0" y="1002" width="4.5" height="8" fill="#2a2930"/>
<rect x="855.6" y="1002" width="16.4" height="8" fill="#2a2930"/>
<rect x="876.6" y="1002" width="8.4" height="8" fill="#404048"/>
<rect x="889.0" y="1002" width="3.0" height="8" fill="#606062"/>
<rect x="966.0" y="1002" width="8.0" height="8" fill="url(#gC)"/>
<rect x="1035.0" y="1002" width="19.0" height="8" fill="url(#gD)"/>
<rect x="1102.0" y="1002" width="5.0" height="8" fill="#707072"/>
<rect x="1123.0" y="1002" width="7.0" height="8" fill="#2a2930"/>
<rect x="1238.0" y="1002" width="8.0" height="8" fill="#282730"/>
<rect x="1265.6" y="1002" width="3.4" height="8" fill="#26252d"/>
<rect x="1311.8" y="1002" width="80.8" height="8" fill="#ffffff"/>
<rect x="1399.0" y="1002" width="8.0" height="8" fill="#6a6a6c"/>
<rect x="1617.0" y="1002" width="19.0" height="8" fill="#ffffff"/>
<rect x="1645.0" y="1002" width="5.0" height="8" fill="#808082"/>
<rect x="1675.6" y="1002" width="25.4" height="8" fill="#2e2d35"/>
<rect x="1770.0" y="1002" width="6.0" height="8" fill="#282730"/>
<rect x="1785.0" y="1002" width="12.0" height="8" fill="#4a4950"/>
<rect x="1798.0" y="1002" width="24.5" height="8" fill="url(#gE)"/>
<path fill="#f5e187" d="M511.5 1108.3 C513.4 1108.3 520.7 1108.3 523.0 1108.3 C525.3 1108.0 523.5 1107.4 525.3 1106.5 C527.1 1105.6 531.6 1103.1 533.8 1103.1 C536.0 1103.1 536.7 1106.2 538.4 1106.5 C540.0 1106.5 542.2 1104.7 543.8 1104.7 C545.3 1104.9 546.4 1107.5 547.6 1107.7 C548.7 1107.7 549.6 1105.7 550.7 1105.7 C551.7 1105.8 551.9 1108.0 553.7 1108.0 C555.5 1107.9 559.4 1105.3 561.4 1104.7 C563.5 1104.2 563.5 1104.2 566.0 1104.2 C568.6 1104.2 573.7 1104.6 576.8 1105.0 C579.8 1105.3 582.7 1105.9 584.4 1106.5 C586.2 1107.1 586.2 1108.3 587.5 1108.3 C588.8 1108.0 590.3 1105.3 592.1 1104.7 C593.9 1104.7 595.7 1104.7 598.3 1104.7 C600.8 1105.3 603.4 1107.7 607.5 1108.3 C611.6 1108.3 618.2 1108.3 622.8 1108.3 C627.4 1108.3 631.8 1108.3 635.1 1108.3 C638.4 1108.3 637.2 1108.3 642.8 1108.3 C648.4 1108.3 663.8 1108.3 668.9 1108.3 C674.0 1108.0 672.1 1106.2 673.5 1106.2 C674.9 1106.2 675.5 1108.3 677.3 1108.3 C679.1 1107.9 680.5 1104.1 684.2 1103.4 C688.0 1103.4 694.5 1104.1 699.6 1104.2 C704.7 1104.2 708.8 1104.2 715.0 1104.2 C721.1 1104.6 732.4 1105.8 736.5 1106.5 C740.5 1107.2 738.0 1108.3 739.5 1108.3 C741.1 1108.1 742.1 1105.6 745.7 1105.3 C749.2 1105.3 756.9 1106.0 761.0 1106.5 C765.1 1107.0 765.4 1108.0 770.2 1108.3 C775.1 1108.3 786.4 1108.3 790.0 1108.3 C793.6 1108.3 790.7 1108.3 791.7 1108.3 C792.7 1108.2 795.1 1108.2 796.1 1107.7 C797.1 1107.3 795.6 1106.1 797.7 1105.7 C799.7 1105.7 805.1 1105.7 808.4 1105.7 C811.8 1105.6 815.0 1105.0 817.6 1105.0 C820.3 1105.1 823.0 1105.9 824.5 1106.5 C826.1 1107.1 825.4 1108.1 826.8 1108.3 C828.3 1108.3 831.5 1108.3 833.0 1108.0 C834.5 1107.3 833.0 1105.1 836.1 1104.2 C839.1 1103.3 846.8 1102.7 851.4 1102.7 C856.0 1103.0 861.1 1105.6 863.7 1106.5 C866.3 1107.4 865.2 1108.3 866.8 1108.3 C868.3 1108.3 871.4 1107.3 872.9 1106.5 C874.4 1105.7 873.2 1104.0 876.0 1103.4 C878.8 1103.1 886.2 1103.1 889.8 1103.1 C893.4 1103.6 895.7 1105.6 897.5 1106.5 C899.3 1107.4 899.5 1108.3 900.5 1108.3 C901.6 1107.8 901.6 1103.7 903.6 1103.4 C905.7 1103.4 910.0 1105.8 912.8 1106.5 C915.6 1107.2 917.4 1107.5 920.5 1107.7 C923.6 1108.0 928.7 1108.0 931.3 1108.0 C933.8 1107.5 933.8 1104.7 935.9 1104.7 C937.9 1104.7 939.7 1107.7 943.5 1108.0 C947.4 1108.0 954.3 1107.1 958.9 1106.5 C963.5 1105.9 966.8 1104.7 971.2 1104.7 C975.5 1104.9 981.9 1108.0 985.0 1108.0 C988.1 1107.8 986.3 1104.0 989.6 1103.4 C992.9 1103.4 999.8 1104.0 1005.0 1104.7 C1010.1 1105.3 1017.2 1106.7 1020.3 1107.3 C1023.4 1107.9 1022.4 1108.3 1023.4 1108.3 C1024.4 1108.3 1024.4 1107.9 1026.5 1107.3 C1028.5 1106.7 1031.6 1104.9 1035.7 1104.7 C1039.8 1104.7 1047.2 1105.7 1051.0 1105.7 C1054.9 1105.5 1056.1 1103.1 1058.7 1103.1 C1061.3 1103.2 1062.8 1105.7 1066.4 1106.5 C1069.9 1107.3 1077.4 1107.9 1080.0 1108.0 C1082.6 1108.0 1081.0 1107.6 1081.7 1107.3 C1082.5 1106.9 1082.8 1106.1 1084.6 1105.7 C1086.4 1105.3 1089.7 1105.0 1092.3 1105.0 C1094.8 1105.2 1098.2 1106.7 1100.0 1107.3 C1101.8 1107.8 1097.9 1108.2 1103.0 1108.3 C1108.1 1108.3 1125.3 1108.3 1130.7 1108.3 C1136.0 1107.9 1133.0 1106.7 1135.3 1105.7 C1137.6 1104.8 1141.4 1102.7 1144.5 1102.7 C1147.6 1102.7 1150.1 1105.2 1153.7 1105.7 C1157.3 1105.7 1162.4 1105.7 1166.0 1105.7 C1169.6 1105.6 1171.6 1105.0 1175.2 1105.0 C1178.8 1105.0 1182.9 1105.7 1187.5 1105.7 C1192.1 1105.6 1197.7 1104.2 1202.8 1104.2 C1207.9 1104.4 1214.3 1106.6 1218.2 1107.3 C1222.0 1108.0 1216.9 1108.2 1225.9 1108.3 C1234.8 1108.3 1263.5 1108.3 1271.9 1108.3 C1280.4 1108.2 1274.7 1107.3 1276.5 1107.3 C1278.3 1107.3 1280.9 1108.3 1282.7 1108.3 C1284.5 1108.1 1284.7 1106.4 1287.3 1105.7 C1289.8 1105.0 1294.2 1104.4 1298.0 1104.2 C1301.9 1104.2 1306.7 1104.2 1310.3 1104.2 C1313.9 1104.8 1317.0 1107.9 1319.5 1108.0 C1322.1 1108.0 1322.1 1105.7 1325.7 1105.3 C1329.2 1105.3 1337.7 1105.3 1341.0 1105.7 C1344.3 1106.2 1344.1 1108.3 1345.6 1108.3 C1347.2 1108.2 1344.5 1105.3 1350.2 1105.0 C1356.0 1105.0 1372.2 1106.2 1380.0 1106.5 C1387.8 1106.7 1392.6 1106.5 1396.9 1106.7 C1401.2 1107.0 1403.4 1108.3 1405.8 1108.3 C1408.2 1108.2 1407.6 1106.0 1411.2 1105.8 C1414.8 1105.8 1423.7 1106.7 1427.3 1106.7 C1430.9 1106.4 1429.7 1104.6 1432.7 1104.5 C1435.7 1104.5 1442.5 1105.7 1445.2 1106.3 C1447.9 1106.9 1447.6 1108.3 1448.8 1108.3 C1450.0 1107.8 1450.0 1103.4 1452.4 1103.1 C1454.8 1103.1 1460.8 1105.8 1463.1 1106.7 C1465.5 1107.5 1465.5 1108.3 1466.7 1108.3 C1467.9 1108.1 1468.5 1105.5 1470.3 1105.2 C1472.1 1105.2 1475.4 1106.1 1477.5 1106.7 C1479.6 1107.2 1481.1 1108.3 1482.8 1108.3 C1484.6 1107.8 1485.5 1103.3 1488.2 1103.1 C1490.9 1103.1 1496.0 1106.2 1499.0 1107.0 C1501.9 1107.8 1502.5 1108.1 1506.1 1108.1 C1509.7 1107.4 1515.1 1103.2 1520.5 1103.1 C1525.8 1103.1 1533.6 1107.3 1538.4 1107.5 C1543.1 1107.5 1545.2 1104.5 1549.1 1104.5 C1553.0 1104.6 1558.7 1108.3 1561.7 1108.3 C1564.6 1108.3 1564.3 1104.9 1567.0 1104.9 C1569.7 1104.9 1574.8 1108.3 1577.8 1108.3 C1580.8 1108.3 1580.8 1105.2 1584.9 1104.5 C1589.1 1104.0 1596.3 1104.0 1602.8 1104.0 C1609.4 1104.0 1619.3 1104.1 1624.3 1104.5 C1629.4 1104.9 1627.9 1106.4 1633.3 1106.7 C1638.7 1106.7 1651.2 1106.3 1656.6 1106.3 C1662.0 1106.6 1662.6 1108.3 1665.5 1108.3 C1668.5 1108.1 1670.0 1105.1 1674.5 1104.9 C1679.0 1104.9 1687.2 1106.4 1692.4 1106.7 C1697.6 1106.7 1703.6 1106.4 1705.8 1106.3 L1705.8 1112.4 C1703.6 1112.5 1697.6 1112.4 1692.4 1112.9 C1687.2 1113.5 1679.0 1115.6 1674.5 1115.6 C1670.0 1115.0 1668.5 1109.6 1665.5 1109.3 C1662.6 1109.3 1662.0 1113.7 1656.6 1114.2 C1651.2 1114.2 1638.7 1112.4 1633.3 1112.4 C1627.9 1112.8 1629.4 1116.0 1624.3 1116.5 C1619.3 1116.5 1609.4 1115.6 1602.8 1115.6 C1596.3 1115.8 1589.1 1117.4 1584.9 1117.4 C1580.8 1116.4 1580.8 1110.1 1577.8 1109.3 C1574.8 1109.3 1569.7 1112.9 1567.0 1112.9 C1564.3 1112.9 1564.6 1109.3 1561.7 1109.3 C1558.7 1109.7 1553.0 1114.7 1549.1 1115.2 C1545.2 1115.2 1543.1 1112.9 1538.4 1112.9 C1533.6 1113.5 1525.8 1118.8 1520.5 1118.8 C1515.1 1118.3 1509.7 1111.0 1506.1 1109.9 C1502.5 1109.9 1501.9 1110.3 1499.0 1112.0 C1496.0 1113.7 1490.9 1120.1 1488.2 1120.1 C1485.5 1119.6 1484.6 1110.7 1482.8 1109.3 C1481.1 1109.3 1479.6 1111.1 1477.5 1111.7 C1475.4 1112.3 1472.1 1112.9 1470.3 1112.9 C1468.5 1112.5 1467.9 1109.3 1466.7 1109.3 C1465.5 1109.7 1465.5 1113.8 1463.1 1115.2 C1460.8 1116.7 1454.8 1117.8 1452.4 1117.8 C1450.0 1116.8 1450.0 1109.9 1448.8 1109.3 C1447.6 1109.3 1447.9 1113.1 1445.2 1114.2 C1442.5 1115.2 1435.7 1115.6 1432.7 1115.6 C1429.7 1115.5 1430.9 1114.1 1427.3 1113.8 C1423.7 1113.8 1414.8 1113.8 1411.2 1113.8 C1407.6 1113.1 1408.2 1109.6 1405.8 1109.3 C1403.4 1109.3 1401.2 1111.6 1396.9 1112.4 C1392.6 1113.2 1387.8 1114.1 1380.0 1114.2 C1372.2 1114.2 1356.0 1113.4 1350.2 1112.6 C1344.5 1111.9 1347.2 1109.6 1345.6 1109.6 C1344.1 1109.6 1344.3 1111.5 1341.0 1112.6 C1337.7 1113.8 1329.2 1116.5 1325.7 1116.5 C1322.1 1116.1 1322.1 1110.5 1319.5 1110.3 C1317.0 1110.3 1313.9 1114.4 1310.3 1115.7 C1306.7 1117.0 1301.9 1118.0 1298.0 1118.0 C1294.2 1117.5 1289.8 1114.0 1287.3 1112.6 C1284.7 1111.2 1284.5 1109.6 1282.7 1109.6 C1280.9 1109.6 1278.3 1112.6 1276.5 1112.6 C1274.7 1112.6 1280.4 1109.8 1271.9 1109.3 C1263.5 1109.3 1234.8 1109.3 1225.9 1109.3 C1216.9 1109.6 1222.0 1110.0 1218.2 1111.1 C1214.3 1112.2 1207.9 1115.5 1202.8 1115.7 C1197.7 1115.7 1192.1 1112.6 1187.5 1112.6 C1182.9 1112.6 1178.8 1115.6 1175.2 1115.7 C1171.6 1115.7 1169.6 1114.0 1166.0 1113.4 C1162.4 1112.8 1157.3 1112.3 1153.7 1112.3 C1150.1 1112.8 1147.6 1116.4 1144.5 1116.5 C1141.4 1116.5 1137.6 1113.8 1135.3 1112.6 C1133.0 1111.4 1136.0 1109.8 1130.7 1109.3 C1125.3 1109.3 1108.1 1109.3 1103.0 1109.3 C1097.9 1109.7 1101.8 1111.1 1100.0 1111.9 C1098.2 1112.7 1094.8 1114.0 1092.3 1114.2 C1089.7 1114.2 1086.4 1113.2 1084.6 1112.6 C1082.8 1112.1 1082.5 1111.5 1081.7 1111.1 C1081.0 1110.7 1082.6 1110.3 1080.0 1110.3 C1077.4 1110.6 1069.9 1111.5 1066.4 1112.6 C1062.8 1113.8 1061.3 1117.1 1058.7 1117.2 C1056.1 1117.2 1054.9 1113.9 1051.0 1113.4 C1047.2 1113.4 1039.8 1114.2 1035.7 1114.2 C1031.6 1113.8 1028.5 1111.9 1026.5 1111.1 C1024.4 1110.3 1024.4 1109.3 1023.4 1109.3 C1022.4 1109.3 1023.4 1110.0 1020.3 1111.1 C1017.2 1112.2 1010.1 1114.8 1005.0 1115.7 C999.8 1116.5 992.9 1116.5 989.6 1116.5 C986.3 1115.6 988.1 1110.3 985.0 1110.3 C981.9 1110.3 975.5 1116.2 971.2 1116.5 C966.8 1116.5 963.5 1112.8 958.9 1111.9 C954.3 1111.1 947.4 1111.1 943.5 1111.1 C939.7 1111.2 937.9 1112.6 935.9 1112.6 C933.8 1112.5 933.8 1110.5 931.3 1110.3 C928.7 1110.3 923.6 1111.2 920.5 1111.9 C917.4 1112.5 915.6 1113.3 912.8 1114.2 C910.0 1115.1 905.7 1117.2 903.6 1117.2 C901.6 1116.5 901.6 1110.3 900.5 1109.6 C899.5 1109.6 899.3 1111.4 897.5 1112.6 C895.7 1113.9 893.4 1116.5 889.8 1117.2 C886.2 1117.2 878.8 1117.2 876.0 1117.2 C873.2 1116.3 874.4 1113.2 872.9 1111.9 C871.4 1110.6 868.3 1109.6 866.8 1109.6 C865.2 1109.7 866.3 1111.3 863.7 1112.6 C861.1 1114.0 856.0 1116.8 851.4 1117.6 C846.8 1117.6 839.1 1117.6 836.1 1117.2 C833.0 1115.9 834.5 1110.9 833.0 1109.6 C831.5 1109.3 828.3 1109.3 826.8 1109.3 C825.4 1109.6 826.1 1110.5 824.5 1111.9 C823.0 1113.2 820.3 1117.1 817.6 1117.2 C815.0 1117.2 811.8 1113.5 808.4 1112.6 C805.1 1111.9 799.7 1112.3 797.7 1111.9 C795.6 1111.4 797.1 1110.3 796.1 1109.9 C795.1 1109.4 792.7 1109.4 791.7 1109.3 C790.7 1109.3 793.6 1109.3 790.0 1109.3 C786.4 1109.3 775.1 1109.3 770.2 1109.6 C765.4 1110.1 765.1 1111.6 761.0 1112.6 C756.9 1113.7 749.2 1115.7 745.7 1115.7 C742.1 1115.3 741.1 1110.7 739.5 1110.3 C738.0 1110.3 740.5 1112.6 736.5 1113.4 C732.4 1114.2 721.1 1114.4 715.0 1114.9 C708.8 1115.5 704.7 1116.0 699.6 1116.5 C694.5 1117.0 688.0 1118.0 684.2 1118.0 C680.5 1116.8 679.1 1110.3 677.3 1109.3 C675.5 1109.3 674.9 1111.9 673.5 1111.9 C672.1 1111.9 674.0 1109.7 668.9 1109.3 C663.8 1109.2 648.4 1109.3 642.8 1109.2 C637.2 1109.2 638.4 1109.2 635.1 1109.2 C631.8 1109.4 627.4 1109.6 622.8 1109.9 C618.2 1110.2 611.6 1110.1 607.5 1111.1 C603.4 1112.1 600.8 1114.8 598.3 1115.7 C595.7 1116.5 593.9 1116.5 592.1 1116.5 C590.3 1115.5 588.8 1110.0 587.5 1109.6 C586.2 1109.6 586.2 1113.0 584.4 1114.2 C582.7 1115.3 579.8 1116.1 576.8 1116.5 C573.7 1116.5 568.6 1116.5 566.0 1116.5 C563.5 1116.3 563.5 1116.5 561.4 1115.7 C559.4 1114.9 555.5 1112.1 553.7 1111.9 C551.9 1111.9 551.7 1113.9 550.7 1114.2 C549.6 1114.2 548.7 1113.4 547.6 1113.4 C546.4 1113.5 545.3 1114.7 543.8 1114.9 C542.2 1114.9 540.0 1114.9 538.4 1114.9 C536.7 1115.6 536.0 1118.8 533.8 1118.8 C531.6 1118.0 527.1 1111.9 525.3 1110.3 C523.5 1109.3 525.3 1109.4 523.0 1109.3 C520.7 1109.3 513.4 1109.3 511.5 1109.3Z"/>
<path fill="#d09660" d="M511.5 1173.3 C513.4 1173.3 520.3 1173.3 523.0 1173.3 C525.7 1173.0 525.8 1172.1 527.6 1171.7 C529.4 1171.3 531.7 1170.9 533.8 1170.9 C535.8 1171.2 538.4 1173.1 539.9 1173.2 C541.5 1173.2 541.5 1172.0 543.0 1172.0 C544.5 1172.0 546.1 1173.2 549.1 1173.2 C552.2 1172.9 558.1 1170.4 561.4 1170.2 C564.7 1170.2 565.5 1171.3 569.1 1171.7 C572.7 1172.1 579.6 1172.8 582.9 1172.8 C586.2 1172.4 587.0 1169.9 589.1 1169.7 C591.1 1169.7 592.6 1171.2 595.2 1171.7 C597.8 1172.2 599.8 1172.5 604.4 1172.8 C609.0 1173.0 617.2 1173.2 622.8 1173.3 C628.5 1173.3 630.5 1173.3 638.2 1173.3 C645.9 1173.3 663.0 1173.3 668.9 1173.3 C674.8 1173.2 672.2 1172.5 673.5 1172.5 C674.8 1172.5 675.5 1173.3 676.6 1173.3 C677.6 1173.3 677.6 1172.8 679.6 1172.5 C681.7 1172.1 685.8 1171.2 688.9 1171.2 C691.9 1171.2 690.1 1172.3 698.1 1172.5 C706.0 1172.5 729.0 1172.5 736.5 1172.2 C743.9 1171.5 741.1 1169.3 742.6 1168.6 C744.1 1167.9 742.6 1167.9 745.7 1167.9 C748.7 1168.4 757.4 1170.8 761.0 1171.7 C764.6 1172.6 762.3 1173.0 767.2 1173.3 C772.0 1173.3 785.9 1173.3 790.0 1173.3 C794.1 1173.3 790.2 1173.3 791.7 1173.3 C793.3 1173.1 797.2 1172.7 799.2 1172.2 C801.2 1171.6 802.3 1170.2 803.8 1170.2 C805.4 1170.2 806.1 1172.5 808.4 1172.5 C810.7 1172.4 814.6 1169.7 817.6 1169.7 C820.7 1169.8 824.3 1172.7 826.8 1173.2 C829.4 1173.2 831.2 1173.2 833.0 1173.2 C834.8 1172.7 834.5 1169.9 837.6 1169.7 C840.7 1169.7 847.1 1171.6 851.4 1172.2 C855.8 1172.8 861.1 1173.1 863.7 1173.2 C866.3 1173.3 864.7 1173.3 866.8 1173.3 C868.8 1172.9 872.1 1171.3 876.0 1170.9 C879.8 1170.9 886.2 1171.0 889.8 1171.2 C893.4 1171.5 895.7 1172.1 897.5 1172.5 C899.3 1172.8 899.0 1173.3 900.5 1173.3 C902.1 1172.8 903.4 1169.8 906.7 1169.7 C910.0 1169.7 916.4 1171.9 920.5 1172.5 C924.6 1173.1 928.7 1173.3 931.3 1173.3 C933.8 1173.1 933.8 1171.3 935.9 1171.2 C937.9 1171.2 940.2 1173.0 943.5 1173.1 C946.9 1173.1 951.2 1172.2 955.8 1171.7 C960.4 1171.2 967.6 1170.2 971.2 1170.2 C974.8 1170.4 975.3 1172.8 977.3 1173.3 C979.4 1173.3 981.4 1173.3 983.5 1173.3 C985.5 1172.8 986.0 1170.4 989.6 1170.2 C993.2 1170.2 1000.3 1171.3 1005.0 1171.7 C1009.6 1172.1 1014.2 1172.2 1017.2 1172.5 C1020.3 1172.7 1020.8 1173.3 1023.4 1173.3 C1025.9 1173.3 1029.5 1172.6 1032.6 1172.5 C1035.7 1172.5 1039.2 1172.5 1041.8 1172.5 C1044.4 1172.6 1045.4 1173.3 1047.9 1173.3 C1050.5 1172.9 1054.1 1170.4 1057.2 1170.2 C1060.2 1170.2 1062.6 1171.8 1066.4 1172.2 C1070.2 1172.5 1077.4 1172.4 1080.0 1172.5 C1082.6 1172.5 1080.7 1172.5 1081.7 1172.5 C1082.7 1172.3 1083.9 1171.7 1086.1 1171.7 C1088.4 1171.8 1091.3 1173.0 1095.4 1173.3 C1099.4 1173.3 1104.3 1173.3 1110.7 1173.3 C1117.1 1173.3 1128.9 1173.3 1133.7 1173.3 C1138.6 1173.0 1137.6 1172.1 1139.9 1171.7 C1142.2 1171.3 1144.2 1170.9 1147.6 1170.9 C1150.9 1171.1 1155.7 1172.6 1159.8 1172.8 C1163.9 1172.8 1169.1 1172.6 1172.1 1172.2 C1175.2 1171.7 1175.7 1170.2 1178.3 1170.2 C1180.8 1170.2 1182.9 1172.4 1187.5 1172.5 C1192.1 1172.5 1200.8 1170.5 1205.9 1170.5 C1211.0 1170.5 1213.6 1172.3 1218.2 1172.8 C1222.8 1173.2 1224.6 1173.2 1233.5 1173.3 C1242.5 1173.3 1264.2 1173.3 1271.9 1173.3 C1279.6 1173.2 1276.8 1173.0 1279.6 1172.8 C1282.4 1172.5 1285.7 1172.0 1288.8 1171.7 C1291.9 1171.4 1293.7 1171.2 1298.0 1171.2 C1302.4 1171.4 1310.3 1172.5 1314.9 1172.5 C1319.5 1172.3 1321.3 1170.2 1325.7 1170.2 C1330.0 1170.3 1337.2 1172.9 1341.0 1173.2 C1344.9 1173.2 1342.2 1172.4 1348.7 1172.2 C1355.2 1171.9 1372.0 1171.7 1380.0 1171.7 C1388.0 1171.7 1392.9 1172.0 1396.9 1172.3 C1400.9 1172.5 1401.6 1173.2 1404.0 1173.2 C1406.4 1173.0 1407.9 1171.2 1411.2 1171.0 C1414.5 1171.0 1420.5 1171.9 1423.7 1171.9 C1427.0 1171.8 1427.3 1170.7 1430.9 1170.7 C1434.5 1170.8 1441.9 1172.8 1445.2 1172.8 C1448.5 1172.6 1447.6 1169.6 1450.6 1169.6 C1453.6 1169.6 1459.3 1172.6 1463.1 1172.8 C1467.0 1172.8 1470.9 1171.0 1473.9 1171.0 C1476.9 1171.1 1478.1 1173.2 1481.1 1173.2 C1484.0 1173.1 1487.0 1170.7 1491.8 1170.7 C1496.6 1170.7 1505.2 1173.0 1509.7 1173.2 C1514.2 1173.2 1513.6 1171.9 1518.7 1171.9 C1523.7 1171.9 1535.7 1173.2 1540.2 1173.2 C1544.6 1173.2 1541.7 1172.0 1545.5 1171.9 C1549.4 1171.9 1559.6 1172.4 1563.4 1172.4 C1567.3 1172.4 1566.4 1171.4 1568.8 1171.4 C1571.2 1171.5 1574.5 1173.2 1577.8 1173.2 C1581.1 1173.1 1584.9 1171.0 1588.5 1171.0 C1592.1 1171.0 1596.3 1173.2 1599.3 1173.2 C1602.3 1173.2 1603.1 1171.1 1606.4 1171.0 C1609.7 1171.0 1615.7 1172.8 1619.0 1172.8 C1622.3 1172.7 1623.4 1170.1 1626.1 1170.1 C1628.8 1170.2 1631.2 1173.0 1635.1 1173.2 C1639.0 1173.2 1644.6 1171.0 1649.4 1171.0 C1654.2 1171.0 1659.6 1173.1 1663.7 1173.2 C1667.9 1173.2 1670.9 1171.4 1674.5 1171.4 C1678.1 1171.4 1680.2 1172.9 1685.2 1173.2 C1690.3 1173.2 1701.7 1172.9 1704.9 1172.8 L1704.9 1174.6 C1701.7 1174.5 1690.3 1174.2 1685.2 1174.2 C1680.2 1174.5 1678.1 1176.0 1674.5 1176.0 C1670.9 1176.0 1667.9 1174.2 1663.7 1174.2 C1659.6 1174.3 1654.2 1176.4 1649.4 1176.4 C1644.6 1176.4 1639.0 1174.2 1635.1 1174.2 C1631.2 1174.4 1628.8 1177.2 1626.1 1177.3 C1623.4 1177.3 1622.3 1174.7 1619.0 1174.6 C1615.7 1174.6 1609.7 1176.4 1606.4 1176.4 C1603.1 1176.3 1602.3 1174.2 1599.3 1174.2 C1596.3 1174.2 1592.1 1176.4 1588.5 1176.4 C1584.9 1176.4 1581.1 1174.3 1577.8 1174.2 C1574.5 1174.2 1571.2 1175.9 1568.8 1176.0 C1566.4 1176.0 1567.3 1175.0 1563.4 1175.0 C1559.6 1175.0 1549.4 1175.5 1545.5 1175.5 C1541.7 1175.4 1544.6 1174.2 1540.2 1174.2 C1535.7 1174.2 1523.7 1175.5 1518.7 1175.5 C1513.6 1175.5 1514.2 1174.2 1509.7 1174.2 C1505.2 1174.4 1496.6 1176.7 1491.8 1176.7 C1487.0 1176.7 1484.0 1174.3 1481.1 1174.2 C1478.1 1174.2 1476.9 1176.3 1473.9 1176.4 C1470.9 1176.4 1467.0 1174.6 1463.1 1174.6 C1459.3 1174.8 1453.6 1177.8 1450.6 1177.8 C1447.6 1177.8 1448.5 1174.8 1445.2 1174.6 C1441.9 1174.6 1434.5 1176.6 1430.9 1176.7 C1427.3 1176.7 1427.0 1175.6 1423.7 1175.5 C1420.5 1175.5 1414.5 1176.4 1411.2 1176.4 C1407.9 1176.2 1406.4 1174.4 1404.0 1174.2 C1401.6 1174.2 1400.9 1174.9 1396.9 1175.1 C1392.9 1175.4 1388.0 1175.7 1380.0 1175.7 C1372.0 1175.7 1355.2 1175.5 1348.7 1175.2 C1342.2 1175.0 1344.9 1174.2 1341.0 1174.2 C1337.2 1174.5 1330.0 1177.1 1325.7 1177.2 C1321.3 1177.2 1319.5 1175.1 1314.9 1174.9 C1310.3 1174.9 1302.4 1176.0 1298.0 1176.2 C1293.7 1176.2 1291.9 1176.0 1288.8 1175.7 C1285.7 1175.4 1282.4 1174.9 1279.6 1174.6 C1276.8 1174.4 1279.6 1174.2 1271.9 1174.1 C1264.2 1174.1 1242.5 1174.1 1233.5 1174.1 C1224.6 1174.2 1222.8 1174.2 1218.2 1174.6 C1213.6 1175.1 1211.0 1176.9 1205.9 1176.9 C1200.8 1176.9 1192.1 1174.9 1187.5 1174.9 C1182.9 1175.0 1180.8 1177.2 1178.3 1177.2 C1175.7 1177.2 1175.2 1175.7 1172.1 1175.2 C1169.1 1174.8 1163.9 1174.6 1159.8 1174.6 C1155.7 1174.8 1150.9 1176.3 1147.6 1176.5 C1144.2 1176.5 1142.2 1176.1 1139.9 1175.7 C1137.6 1175.3 1138.6 1174.4 1133.7 1174.1 C1128.9 1174.1 1117.1 1174.1 1110.7 1174.1 C1104.3 1174.1 1099.4 1174.1 1095.4 1174.1 C1091.3 1174.4 1088.4 1175.6 1086.1 1175.7 C1083.9 1175.7 1082.7 1175.1 1081.7 1174.9 C1080.7 1174.9 1082.6 1174.9 1080.0 1174.9 C1077.4 1175.0 1070.2 1174.9 1066.4 1175.2 C1062.6 1175.6 1060.2 1177.2 1057.2 1177.2 C1054.1 1177.0 1050.5 1174.5 1047.9 1174.1 C1045.4 1174.1 1044.4 1174.8 1041.8 1174.9 C1039.2 1174.9 1035.7 1174.9 1032.6 1174.9 C1029.5 1174.8 1025.9 1174.1 1023.4 1174.1 C1020.8 1174.1 1020.3 1174.7 1017.2 1174.9 C1014.2 1175.2 1009.6 1175.3 1005.0 1175.7 C1000.3 1176.1 993.2 1177.2 989.6 1177.2 C986.0 1177.0 985.5 1174.6 983.5 1174.1 C981.4 1174.1 979.4 1174.1 977.3 1174.1 C975.3 1174.6 974.8 1177.0 971.2 1177.2 C967.6 1177.2 960.4 1176.2 955.8 1175.7 C951.2 1175.2 946.9 1174.3 943.5 1174.3 C940.2 1174.4 937.9 1176.2 935.9 1176.2 C933.8 1176.1 933.8 1174.3 931.3 1174.1 C928.7 1174.1 924.6 1174.3 920.5 1174.9 C916.4 1175.5 910.0 1177.7 906.7 1177.7 C903.4 1177.6 902.1 1174.6 900.5 1174.1 C899.0 1174.1 899.3 1174.6 897.5 1174.9 C895.7 1175.3 893.4 1175.9 889.8 1176.2 C886.2 1176.4 879.8 1176.5 876.0 1176.5 C872.1 1176.1 868.8 1174.5 866.8 1174.1 C864.7 1174.1 866.3 1174.1 863.7 1174.2 C861.1 1174.3 855.8 1174.6 851.4 1175.2 C847.1 1175.8 840.7 1177.7 837.6 1177.7 C834.5 1177.5 834.8 1174.7 833.0 1174.2 C831.2 1174.2 829.4 1174.2 826.8 1174.2 C824.3 1174.7 820.7 1177.6 817.6 1177.7 C814.6 1177.7 810.7 1175.0 808.4 1174.9 C806.1 1174.9 805.4 1177.2 803.8 1177.2 C802.3 1177.2 801.2 1175.8 799.2 1175.2 C797.2 1174.7 793.3 1174.3 791.7 1174.1 C790.2 1174.1 794.1 1174.1 790.0 1174.1 C785.9 1174.1 772.0 1174.1 767.2 1174.1 C762.3 1174.4 764.6 1174.8 761.0 1175.7 C757.4 1176.6 748.7 1179.0 745.7 1179.5 C742.6 1179.5 744.1 1179.5 742.6 1178.8 C741.1 1178.1 743.9 1175.9 736.5 1175.2 C729.0 1174.9 706.0 1174.9 698.1 1174.9 C690.1 1175.1 691.9 1176.2 688.9 1176.2 C685.8 1176.2 681.7 1175.3 679.6 1174.9 C677.6 1174.6 677.6 1174.1 676.6 1174.1 C675.5 1174.1 674.8 1174.9 673.5 1174.9 C672.2 1174.9 674.8 1174.2 668.9 1174.1 C663.0 1174.1 645.9 1174.1 638.2 1174.1 C630.5 1174.1 628.5 1174.1 622.8 1174.1 C617.2 1174.2 609.0 1174.4 604.4 1174.6 C599.8 1174.9 597.8 1175.2 595.2 1175.7 C592.6 1176.2 591.1 1177.7 589.1 1177.7 C587.0 1177.5 586.2 1175.0 582.9 1174.6 C579.6 1174.6 572.7 1175.3 569.1 1175.7 C565.5 1176.1 564.7 1177.2 561.4 1177.2 C558.1 1177.0 552.2 1174.5 549.1 1174.2 C546.1 1174.2 544.5 1175.4 543.0 1175.4 C541.5 1175.4 541.5 1174.2 539.9 1174.2 C538.4 1174.3 535.8 1176.2 533.8 1176.5 C531.7 1176.5 529.4 1176.1 527.6 1175.7 C525.8 1175.3 525.7 1174.4 523.0 1174.1 C520.3 1174.1 513.4 1174.1 511.5 1174.1Z"/>
<rect x="910" y="1078" width="447" height="128" rx="7" fill="#ffffff" fill-opacity="0.2"/>
<g transform="translate(1826 1111) scale(0.9) translate(-1849.5 -173)" fill="none" stroke="#7c7b84" stroke-linecap="round" stroke-linejoin="round">
<polyline stroke-width="3.7" points="1836,173.2 1839.6,162 1839.6,184.8 1844.6,165.2 1844.9,181.6 1850.1,167.6 1850.1,179.6 1853.9,173"/>
<path stroke-width="2.1" d="M1860 163v7M1856.6 166.4l3.4-3.6 3.4 3.6M1860 177v7M1856.6 180.6l3.4 3.6 3.4-3.6"/></g>
<g fill="none" stroke="#7c7b84" stroke-linecap="round" stroke-linejoin="round">
<circle cx="1825.5" cy="1175" r="6.2" stroke-width="3.2"/><path stroke-width="3.4" d="M1830 1179.6L1835 1184.6"/>
<path stroke-width="2.8" d="M1813.6 1175.3H1806.6M1809.8 1172.1L1806.6 1175.3L1809.8 1178.5M1838.2 1175.3H1845.4M1842.2 1172.1L1845.4 1175.3L1842.2 1178.5"/></g>
<path fill="none" stroke="#afafb3" stroke-width="2.6" d="M1913.9 1224.2L1952.6 1185.5 M1920.0 1224.2L1952.6 1191.6 M1926.1 1224.2L1952.6 1197.7 M1932.2 1224.2L1952.6 1203.8 M1938.3 1224.2L1952.6 1209.9 M1944.4 1224.2L1952.6 1216.0 M1950.5 1224.2L1952.6 1222.1"/>
</svg>
</body></html>
